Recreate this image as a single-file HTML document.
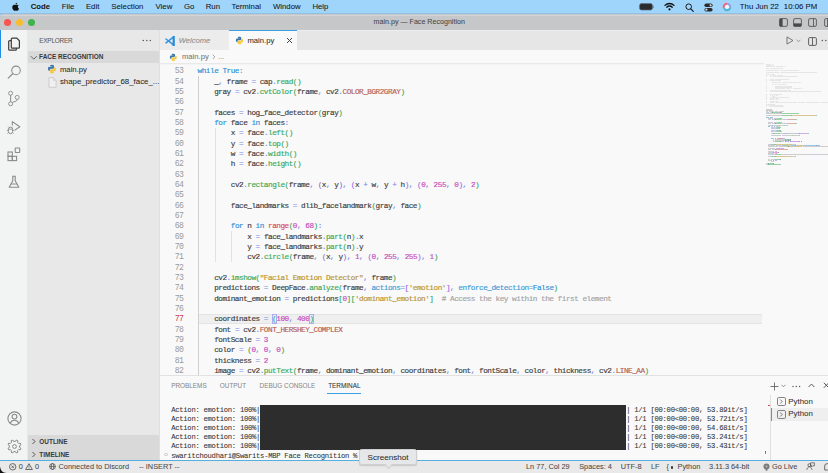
<!DOCTYPE html>
<html><head><meta charset="utf-8">
<style>
*{margin:0;padding:0;box-sizing:border-box}
html,body{width:828px;height:473px;overflow:hidden;background:#000}
body{position:relative;font-family:"Liberation Sans",sans-serif;color:#333}
.a{position:absolute}
.t{position:absolute;white-space:pre;line-height:1;-webkit-text-stroke:0.06px currentColor}
.ln{position:absolute;left:150px;width:33.2px;letter-spacing:-0.75px;text-align:right;font-family:"Liberation Mono",monospace;font-size:8.2px;line-height:10.33px;height:10.33px;white-space:pre}
.cl{position:absolute;letter-spacing:-0.476px;font-family:"Liberation Mono",monospace;font-size:7.7px;line-height:10.33px;height:10.33px;white-space:pre;color:#3b3b3b;-webkit-text-stroke:0.15px currentColor}
.term{position:absolute;font-family:"Liberation Mono",monospace;font-size:6.6px;line-height:9.3px;white-space:pre;color:#333}
</style></head><body>
<!-- menu bar -->
<div class="a" style="left:0;top:0;width:828px;height:20px;background:#a0d5fb"></div>
<div class="a" style="left:0;top:13px;width:828px;height:7px;background:#90c0e4"></div>
<!-- title bar -->
<div class="a" style="left:0;top:14px;width:828px;height:16px;background:#c6c7c9;border-top-left-radius:4px"></div>
<div class="a" style="left:0;top:14.6px;width:828px;height:0.8px;background:#d4d4d6;border-top-left-radius:4px"></div>
<!-- activity bar -->
<div class="a" style="left:0;top:30px;width:27px;height:430px;background:#f2f3f3"></div>
<div class="a" style="left:0;top:30px;width:1.4px;height:27.5px;background:#1f8ee6"></div>
<!-- sidebar -->
<div class="a" style="left:27px;top:30px;width:133px;height:430px;background:#e8e8e8"></div>
<div class="a" style="left:27.5px;top:51px;width:132px;height:11.5px;background:#d9d9da"></div>
<div class="a" style="left:27.5px;top:435px;width:132px;height:25px;background:#d9d9da"></div>
<!-- tab bar -->
<div class="a" style="left:160px;top:30px;width:668px;height:20px;background:#e6e6e6"></div>
<div class="a" style="left:160px;top:30px;width:69px;height:20px;background:#ececec"></div>
<div class="a" style="left:229px;top:30px;width:68px;height:20px;background:#f9f9f9"></div>
<div class="a" style="left:229px;top:30px;width:68px;height:1px;background:#3c9ee0"></div>
<div class="a" style="left:297px;top:30px;width:531px;height:1px;background:#ededef"></div>
<!-- breadcrumb + editor -->
<div class="a" style="left:160px;top:50px;width:668px;height:326px;background:#f9f9f9"></div>
<div class="a" style="left:160px;top:63px;width:604px;height:2px;background:linear-gradient(#e3e3e3,#f9f9f9)"></div>
<div class="a" style="left:199px;top:313.62px;width:563px;height:10.33px;background:#efefef;border-top:0.6px solid #e4e4e4;border-bottom:0.6px solid #e4e4e4"></div>
<div class="a" style="left:198.20px;top:76.03px;width:0.8px;height:298.97px;background:#d0d0d0"></div>
<div class="a" style="left:214.78px;top:127.68px;width:0.8px;height:134.29px;background:#e2e2e2"></div>
<div class="a" style="left:231.36px;top:230.98px;width:0.8px;height:30.99px;background:#e2e2e2"></div>
<div class="ln" style="top:66.30px;color:#9a9a9a">53</div>
<div class="cl" style="top:66.30px;left:197.60px"><span style="color:#2a8fd6">while</span> <span style="color:#2a8fd6">True</span><span style="color:#7b8ae6">:</span></div>
<div class="ln" style="top:76.63px;color:#9a9a9a">54</div>
<div class="cl" style="top:76.63px;left:214.18px"><span style="color:#3b3b3b">_</span><span style="color:#7b8ae6">,</span> <span style="color:#3b3b3b">frame</span> <span style="color:#7b8ae6">=</span> <span style="color:#3b3b3b">cap</span><span style="color:#7b8ae6">.</span><span style="color:#38a858">read</span><span style="color:#38a858">(</span><span style="color:#38a858">)</span></div>
<div class="ln" style="top:86.96px;color:#9a9a9a">55</div>
<div class="cl" style="top:86.96px;left:214.18px"><span style="color:#3b3b3b">gray</span> <span style="color:#7b8ae6">=</span> <span style="color:#3b3b3b">cv2</span><span style="color:#7b8ae6">.</span><span style="color:#38a858">cvtColor</span><span style="color:#38a858">(</span><span style="color:#3b3b3b">frame</span><span style="color:#7b8ae6">,</span> <span style="color:#3b3b3b">cv2</span><span style="color:#7b8ae6">.</span><span style="color:#b5614f">COLOR_BGR2GRAY</span><span style="color:#38a858">)</span></div>
<div class="ln" style="top:97.29px;color:#9a9a9a">56</div>
<div class="cl" style="top:97.29px;left:197.60px"></div>
<div class="ln" style="top:107.62px;color:#9a9a9a">57</div>
<div class="cl" style="top:107.62px;left:214.18px"><span style="color:#3b3b3b">faces</span> <span style="color:#7b8ae6">=</span> <span style="color:#3b3b3b">hog_face_detector</span><span style="color:#38a858">(</span><span style="color:#3b3b3b">gray</span><span style="color:#38a858">)</span></div>
<div class="ln" style="top:117.95px;color:#9a9a9a">58</div>
<div class="cl" style="top:117.95px;left:214.18px"><span style="color:#2a8fd6">for</span> <span style="color:#3b3b3b">face</span> <span style="color:#2a8fd6">in</span> <span style="color:#3b3b3b">faces</span><span style="color:#7b8ae6">:</span></div>
<div class="ln" style="top:128.28px;color:#9a9a9a">59</div>
<div class="cl" style="top:128.28px;left:230.76px"><span style="color:#3b3b3b">x</span> <span style="color:#7b8ae6">=</span> <span style="color:#3b3b3b">face</span><span style="color:#7b8ae6">.</span><span style="color:#38a858">left</span><span style="color:#38a858">(</span><span style="color:#38a858">)</span></div>
<div class="ln" style="top:138.61px;color:#9a9a9a">60</div>
<div class="cl" style="top:138.61px;left:230.76px"><span style="color:#3b3b3b">y</span> <span style="color:#7b8ae6">=</span> <span style="color:#3b3b3b">face</span><span style="color:#7b8ae6">.</span><span style="color:#38a858">top</span><span style="color:#38a858">(</span><span style="color:#38a858">)</span></div>
<div class="ln" style="top:148.94px;color:#9a9a9a">61</div>
<div class="cl" style="top:148.94px;left:230.76px"><span style="color:#3b3b3b">w</span> <span style="color:#7b8ae6">=</span> <span style="color:#3b3b3b">face</span><span style="color:#7b8ae6">.</span><span style="color:#38a858">width</span><span style="color:#38a858">(</span><span style="color:#38a858">)</span></div>
<div class="ln" style="top:159.27px;color:#9a9a9a">62</div>
<div class="cl" style="top:159.27px;left:230.76px"><span style="color:#3b3b3b">h</span> <span style="color:#7b8ae6">=</span> <span style="color:#3b3b3b">face</span><span style="color:#7b8ae6">.</span><span style="color:#38a858">height</span><span style="color:#38a858">(</span><span style="color:#38a858">)</span></div>
<div class="ln" style="top:169.60px;color:#9a9a9a">63</div>
<div class="cl" style="top:169.60px;left:197.60px"></div>
<div class="ln" style="top:179.93px;color:#9a9a9a">64</div>
<div class="cl" style="top:179.93px;left:230.76px"><span style="color:#3b3b3b">cv2</span><span style="color:#7b8ae6">.</span><span style="color:#38a858">rectangle</span><span style="color:#38a858">(</span><span style="color:#3b3b3b">frame</span><span style="color:#7b8ae6">,</span> <span style="color:#9b6fe0">(</span><span style="color:#3b3b3b">x</span><span style="color:#7b8ae6">,</span> <span style="color:#3b3b3b">y</span><span style="color:#9b6fe0">)</span><span style="color:#7b8ae6">,</span> <span style="color:#9b6fe0">(</span><span style="color:#3b3b3b">x</span> <span style="color:#7b8ae6">+</span> <span style="color:#3b3b3b">w</span><span style="color:#7b8ae6">,</span> <span style="color:#3b3b3b">y</span> <span style="color:#7b8ae6">+</span> <span style="color:#3b3b3b">h</span><span style="color:#9b6fe0">)</span><span style="color:#7b8ae6">,</span> <span style="color:#9b6fe0">(</span><span style="color:#c845bd">0</span><span style="color:#7b8ae6">,</span> <span style="color:#c845bd">255</span><span style="color:#7b8ae6">,</span> <span style="color:#c845bd">0</span><span style="color:#9b6fe0">)</span><span style="color:#7b8ae6">,</span> <span style="color:#c845bd">2</span><span style="color:#38a858">)</span></div>
<div class="ln" style="top:190.26px;color:#9a9a9a">65</div>
<div class="cl" style="top:190.26px;left:197.60px"></div>
<div class="ln" style="top:200.59px;color:#9a9a9a">66</div>
<div class="cl" style="top:200.59px;left:230.76px"><span style="color:#3b3b3b">face_landmarks</span> <span style="color:#7b8ae6">=</span> <span style="color:#3b3b3b">dlib_facelandmark</span><span style="color:#38a858">(</span><span style="color:#3b3b3b">gray</span><span style="color:#7b8ae6">,</span> <span style="color:#3b3b3b">face</span><span style="color:#38a858">)</span></div>
<div class="ln" style="top:210.92px;color:#9a9a9a">67</div>
<div class="cl" style="top:210.92px;left:197.60px"></div>
<div class="ln" style="top:221.25px;color:#9a9a9a">68</div>
<div class="cl" style="top:221.25px;left:230.76px"><span style="color:#2a8fd6">for</span> <span style="color:#3b3b3b">n</span> <span style="color:#2a8fd6">in</span> <span style="color:#dc4660">range</span><span style="color:#38a858">(</span><span style="color:#c845bd">0</span><span style="color:#7b8ae6">,</span> <span style="color:#c845bd">68</span><span style="color:#38a858">)</span><span style="color:#7b8ae6">:</span></div>
<div class="ln" style="top:231.58px;color:#9a9a9a">69</div>
<div class="cl" style="top:231.58px;left:247.34px"><span style="color:#3b3b3b">x</span> <span style="color:#7b8ae6">=</span> <span style="color:#3b3b3b">face_landmarks</span><span style="color:#7b8ae6">.</span><span style="color:#38a858">part</span><span style="color:#38a858">(</span><span style="color:#3b3b3b">n</span><span style="color:#38a858">)</span><span style="color:#7b8ae6">.</span><span style="color:#3b3b3b">x</span></div>
<div class="ln" style="top:241.91px;color:#9a9a9a">70</div>
<div class="cl" style="top:241.91px;left:247.34px"><span style="color:#3b3b3b">y</span> <span style="color:#7b8ae6">=</span> <span style="color:#3b3b3b">face_landmarks</span><span style="color:#7b8ae6">.</span><span style="color:#38a858">part</span><span style="color:#38a858">(</span><span style="color:#3b3b3b">n</span><span style="color:#38a858">)</span><span style="color:#7b8ae6">.</span><span style="color:#3b3b3b">y</span></div>
<div class="ln" style="top:252.24px;color:#9a9a9a">71</div>
<div class="cl" style="top:252.24px;left:247.34px"><span style="color:#3b3b3b">cv2</span><span style="color:#7b8ae6">.</span><span style="color:#38a858">circle</span><span style="color:#38a858">(</span><span style="color:#3b3b3b">frame</span><span style="color:#7b8ae6">,</span> <span style="color:#9b6fe0">(</span><span style="color:#3b3b3b">x</span><span style="color:#7b8ae6">,</span> <span style="color:#3b3b3b">y</span><span style="color:#9b6fe0">)</span><span style="color:#7b8ae6">,</span> <span style="color:#c845bd">1</span><span style="color:#7b8ae6">,</span> <span style="color:#9b6fe0">(</span><span style="color:#c845bd">0</span><span style="color:#7b8ae6">,</span> <span style="color:#c845bd">255</span><span style="color:#7b8ae6">,</span> <span style="color:#c845bd">255</span><span style="color:#9b6fe0">)</span><span style="color:#7b8ae6">,</span> <span style="color:#c845bd">1</span><span style="color:#38a858">)</span></div>
<div class="ln" style="top:262.57px;color:#9a9a9a">72</div>
<div class="cl" style="top:262.57px;left:197.60px"></div>
<div class="ln" style="top:272.90px;color:#9a9a9a">73</div>
<div class="cl" style="top:272.90px;left:214.18px"><span style="color:#3b3b3b">cv2</span><span style="color:#7b8ae6">.</span><span style="color:#38a858">imshow</span><span style="color:#38a858">(</span><span style="color:#b8932f">&quot;Facial Emotion Detector&quot;</span><span style="color:#7b8ae6">,</span> <span style="color:#3b3b3b">frame</span><span style="color:#38a858">)</span></div>
<div class="ln" style="top:283.23px;color:#9a9a9a">74</div>
<div class="cl" style="top:283.23px;left:214.18px"><span style="color:#3b3b3b">predictions</span> <span style="color:#7b8ae6">=</span> <span style="color:#3b3b3b">DeepFace</span><span style="color:#7b8ae6">.</span><span style="color:#38a858">analyze</span><span style="color:#38a858">(</span><span style="color:#3b3b3b">frame</span><span style="color:#7b8ae6">,</span> <span style="color:#3a9ad6">actions</span><span style="color:#7b8ae6">=</span><span style="color:#9b6fe0">[</span><span style="color:#b8932f">&#x27;emotion&#x27;</span><span style="color:#9b6fe0">]</span><span style="color:#7b8ae6">,</span> <span style="color:#3a9ad6">enforce_detection</span><span style="color:#7b8ae6">=</span><span style="color:#2a8fd6">False</span><span style="color:#38a858">)</span></div>
<div class="ln" style="top:293.56px;color:#9a9a9a">75</div>
<div class="cl" style="top:293.56px;left:214.18px"><span style="color:#3b3b3b">dominant_emotion</span> <span style="color:#7b8ae6">=</span> <span style="color:#3b3b3b">predictions</span><span style="color:#38a858">[</span><span style="color:#c845bd">0</span><span style="color:#38a858">]</span><span style="color:#38a858">[</span><span style="color:#b8932f">&#x27;dominant_emotion&#x27;</span><span style="color:#38a858">]</span>  <span style="color:#a3a3a3"># Access the key within the first element</span></div>
<div class="ln" style="top:303.89px;color:#9a9a9a">76</div>
<div class="cl" style="top:303.89px;left:197.60px"></div>
<div class="ln" style="top:314.22px;color:#d2405a">77</div>
<div class="cl" style="top:314.22px;left:214.18px"><span style="color:#3b3b3b">coordinates</span> <span style="color:#7b8ae6">=</span> <span style="color:#38a858">(</span><span style="color:#c845bd">100</span><span style="color:#7b8ae6">,</span> <span style="color:#c845bd">400</span><span style="color:#38a858">)</span></div>
<div class="ln" style="top:324.55px;color:#9a9a9a">78</div>
<div class="cl" style="top:324.55px;left:214.18px"><span style="color:#3b3b3b">font</span> <span style="color:#7b8ae6">=</span> <span style="color:#3b3b3b">cv2</span><span style="color:#7b8ae6">.</span><span style="color:#b5614f">FONT_HERSHEY_COMPLEX</span></div>
<div class="ln" style="top:334.88px;color:#9a9a9a">79</div>
<div class="cl" style="top:334.88px;left:214.18px"><span style="color:#3b3b3b">fontScale</span> <span style="color:#7b8ae6">=</span> <span style="color:#c845bd">3</span></div>
<div class="ln" style="top:345.21px;color:#9a9a9a">80</div>
<div class="cl" style="top:345.21px;left:214.18px"><span style="color:#3b3b3b">color</span> <span style="color:#7b8ae6">=</span> <span style="color:#38a858">(</span><span style="color:#c845bd">0</span><span style="color:#7b8ae6">,</span> <span style="color:#c845bd">0</span><span style="color:#7b8ae6">,</span> <span style="color:#c845bd">0</span><span style="color:#38a858">)</span></div>
<div class="ln" style="top:355.54px;color:#9a9a9a">81</div>
<div class="cl" style="top:355.54px;left:214.18px"><span style="color:#3b3b3b">thickness</span> <span style="color:#7b8ae6">=</span> <span style="color:#c845bd">2</span></div>
<div class="ln" style="top:365.87px;color:#9a9a9a">82</div>
<div class="cl" style="top:365.87px;left:214.18px"><span style="color:#3b3b3b">image</span> <span style="color:#7b8ae6">=</span> <span style="color:#3b3b3b">cv2</span><span style="color:#7b8ae6">.</span><span style="color:#38a858">putText</span><span style="color:#38a858">(</span><span style="color:#3b3b3b">frame</span><span style="color:#7b8ae6">,</span> <span style="color:#3b3b3b">dominant_emotion</span><span style="color:#7b8ae6">,</span> <span style="color:#3b3b3b">coordinates</span><span style="color:#7b8ae6">,</span> <span style="color:#3b3b3b">font</span><span style="color:#7b8ae6">,</span> <span style="color:#3b3b3b">fontScale</span><span style="color:#7b8ae6">,</span> <span style="color:#3b3b3b">color</span><span style="color:#7b8ae6">,</span> <span style="color:#3b3b3b">thickness</span><span style="color:#7b8ae6">,</span> <span style="color:#3b3b3b">cv2</span><span style="color:#7b8ae6">.</span><span style="color:#b5614f">LINE_AA</span><span style="color:#38a858">)</span></div>
<div class="a" style="left:271.91px;top:313.82px;width:4.74px;height:9.93px;border:0.8px solid #a9aef0;background:rgba(180,190,255,.08)"></div>
<div class="a" style="left:309.21px;top:313.82px;width:4.74px;height:9.93px;border:0.8px solid #a9aef0;background:rgba(180,190,255,.08)"></div>
<div class="a" style="left:766.00px;top:63.50px;width:0.62px;height:0.7px;background:#e6e6e6"></div>
<div class="a" style="left:767.24px;top:63.50px;width:3.72px;height:0.7px;background:#e6e6e6"></div>
<div class="a" style="left:771.58px;top:63.50px;width:1.86px;height:0.7px;background:#e6e6e6"></div>
<div class="a" style="left:766.00px;top:64.66px;width:0.62px;height:0.7px;background:#e6e6e6"></div>
<div class="a" style="left:767.24px;top:64.66px;width:3.72px;height:0.7px;background:#e6e6e6"></div>
<div class="a" style="left:771.58px;top:64.66px;width:2.48px;height:0.7px;background:#e6e6e6"></div>
<div class="a" style="left:766.00px;top:65.82px;width:0.62px;height:0.7px;background:#e6e6e6"></div>
<div class="a" style="left:767.24px;top:65.82px;width:2.48px;height:0.7px;background:#e6e6e6"></div>
<div class="a" style="left:770.34px;top:65.82px;width:4.96px;height:0.7px;background:#e6e6e6"></div>
<div class="a" style="left:775.92px;top:65.82px;width:3.72px;height:0.7px;background:#e6e6e6"></div>
<div class="a" style="left:780.26px;top:65.82px;width:4.96px;height:0.7px;background:#e6e6e6"></div>
<div class="a" style="left:766.00px;top:68.14px;width:0.62px;height:0.7px;background:#e6e6e6"></div>
<div class="a" style="left:767.24px;top:68.14px;width:1.86px;height:0.7px;background:#e6e6e6"></div>
<div class="a" style="left:769.72px;top:68.14px;width:0.62px;height:0.7px;background:#e6e6e6"></div>
<div class="a" style="left:770.96px;top:68.14px;width:11.78px;height:0.7px;background:#e6e6e6"></div>
<div class="a" style="left:766.00px;top:70.46px;width:0.62px;height:0.7px;background:#e6e6e6"></div>
<div class="a" style="left:767.24px;top:70.46px;width:10.54px;height:0.7px;background:#e6e6e6"></div>
<div class="a" style="left:778.40px;top:70.46px;width:0.62px;height:0.7px;background:#e6e6e6"></div>
<div class="a" style="left:779.64px;top:70.46px;width:19.84px;height:0.7px;background:#e6e6e6"></div>
<div class="a" style="left:766.00px;top:71.62px;width:0.62px;height:0.7px;background:#e6e6e6"></div>
<div class="a" style="left:767.24px;top:71.62px;width:10.54px;height:0.7px;background:#e6e6e6"></div>
<div class="a" style="left:778.40px;top:71.62px;width:0.62px;height:0.7px;background:#e6e6e6"></div>
<div class="a" style="left:779.64px;top:71.62px;width:37.82px;height:0.7px;background:#e6e6e6"></div>
<div class="a" style="left:766.00px;top:73.94px;width:0.62px;height:0.7px;background:#e6e6e6"></div>
<div class="a" style="left:767.24px;top:73.94px;width:3.10px;height:0.7px;background:#e6e6e6"></div>
<div class="a" style="left:770.96px;top:73.94px;width:3.10px;height:0.7px;background:#e6e6e6"></div>
<div class="a" style="left:766.00px;top:75.10px;width:0.62px;height:0.7px;background:#e6e6e6"></div>
<div class="a" style="left:769.72px;top:75.10px;width:1.24px;height:0.7px;background:#e6e6e6"></div>
<div class="a" style="left:771.58px;top:75.10px;width:3.10px;height:0.7px;background:#e6e6e6"></div>
<div class="a" style="left:775.30px;top:75.10px;width:0.62px;height:0.7px;background:#e6e6e6"></div>
<div class="a" style="left:776.54px;top:75.10px;width:6.20px;height:0.7px;background:#e6e6e6"></div>
<div class="a" style="left:766.00px;top:76.26px;width:0.62px;height:0.7px;background:#e6e6e6"></div>
<div class="a" style="left:769.72px;top:76.26px;width:2.48px;height:0.7px;background:#e6e6e6"></div>
<div class="a" style="left:772.82px;top:76.26px;width:0.62px;height:0.7px;background:#e6e6e6"></div>
<div class="a" style="left:774.06px;top:76.26px;width:11.78px;height:0.7px;background:#e6e6e6"></div>
<div class="a" style="left:786.46px;top:76.26px;width:11.78px;height:0.7px;background:#e6e6e6"></div>
<div class="a" style="left:766.00px;top:78.58px;width:0.62px;height:0.7px;background:#e6e6e6"></div>
<div class="a" style="left:769.72px;top:78.58px;width:3.10px;height:0.7px;background:#e6e6e6"></div>
<div class="a" style="left:773.44px;top:78.58px;width:0.62px;height:0.7px;background:#e6e6e6"></div>
<div class="a" style="left:774.68px;top:78.58px;width:14.26px;height:0.7px;background:#e6e6e6"></div>
<div class="a" style="left:766.00px;top:79.74px;width:0.62px;height:0.7px;background:#e6e6e6"></div>
<div class="a" style="left:769.72px;top:79.74px;width:1.86px;height:0.7px;background:#e6e6e6"></div>
<div class="a" style="left:772.20px;top:79.74px;width:2.48px;height:0.7px;background:#e6e6e6"></div>
<div class="a" style="left:775.30px;top:79.74px;width:1.24px;height:0.7px;background:#e6e6e6"></div>
<div class="a" style="left:777.16px;top:79.74px;width:3.72px;height:0.7px;background:#e6e6e6"></div>
<div class="a" style="left:766.00px;top:82.06px;width:0.62px;height:0.7px;background:#e6e6e6"></div>
<div class="a" style="left:772.20px;top:82.06px;width:8.68px;height:0.7px;background:#e6e6e6"></div>
<div class="a" style="left:781.50px;top:82.06px;width:0.62px;height:0.7px;background:#e6e6e6"></div>
<div class="a" style="left:782.74px;top:82.06px;width:14.26px;height:0.7px;background:#e6e6e6"></div>
<div class="a" style="left:797.62px;top:82.06px;width:3.10px;height:0.7px;background:#e6e6e6"></div>
<div class="a" style="left:766.00px;top:84.38px;width:0.62px;height:0.7px;background:#e6e6e6"></div>
<div class="a" style="left:772.20px;top:84.38px;width:1.86px;height:0.7px;background:#e6e6e6"></div>
<div class="a" style="left:774.68px;top:84.38px;width:0.62px;height:0.7px;background:#e6e6e6"></div>
<div class="a" style="left:775.92px;top:84.38px;width:1.24px;height:0.7px;background:#e6e6e6"></div>
<div class="a" style="left:777.78px;top:84.38px;width:4.96px;height:0.7px;background:#e6e6e6"></div>
<div class="a" style="left:783.36px;top:84.38px;width:2.48px;height:0.7px;background:#e6e6e6"></div>
<div class="a" style="left:766.00px;top:85.54px;width:0.62px;height:0.7px;background:#e6e6e6"></div>
<div class="a" style="left:774.68px;top:85.54px;width:0.62px;height:0.7px;background:#e6e6e6"></div>
<div class="a" style="left:775.92px;top:85.54px;width:0.62px;height:0.7px;background:#e6e6e6"></div>
<div class="a" style="left:777.16px;top:85.54px;width:14.88px;height:0.7px;background:#e6e6e6"></div>
<div class="a" style="left:766.00px;top:86.70px;width:0.62px;height:0.7px;background:#e6e6e6"></div>
<div class="a" style="left:774.68px;top:86.70px;width:0.62px;height:0.7px;background:#e6e6e6"></div>
<div class="a" style="left:775.92px;top:86.70px;width:0.62px;height:0.7px;background:#e6e6e6"></div>
<div class="a" style="left:777.16px;top:86.70px;width:14.88px;height:0.7px;background:#e6e6e6"></div>
<div class="a" style="left:766.00px;top:87.86px;width:0.62px;height:0.7px;background:#e6e6e6"></div>
<div class="a" style="left:774.68px;top:87.86px;width:10.54px;height:0.7px;background:#e6e6e6"></div>
<div class="a" style="left:785.84px;top:87.86px;width:1.86px;height:0.7px;background:#e6e6e6"></div>
<div class="a" style="left:788.32px;top:87.86px;width:1.86px;height:0.7px;background:#e6e6e6"></div>
<div class="a" style="left:790.80px;top:87.86px;width:1.24px;height:0.7px;background:#e6e6e6"></div>
<div class="a" style="left:792.66px;top:87.86px;width:1.86px;height:0.7px;background:#e6e6e6"></div>
<div class="a" style="left:795.14px;top:87.86px;width:2.48px;height:0.7px;background:#e6e6e6"></div>
<div class="a" style="left:798.24px;top:87.86px;width:3.10px;height:0.7px;background:#e6e6e6"></div>
<div class="a" style="left:801.96px;top:87.86px;width:1.24px;height:0.7px;background:#e6e6e6"></div>
<div class="a" style="left:766.00px;top:90.18px;width:0.62px;height:0.7px;background:#e6e6e6"></div>
<div class="a" style="left:769.72px;top:90.18px;width:9.92px;height:0.7px;background:#e6e6e6"></div>
<div class="a" style="left:780.26px;top:90.18px;width:6.82px;height:0.7px;background:#e6e6e6"></div>
<div class="a" style="left:787.70px;top:90.18px;width:3.72px;height:0.7px;background:#e6e6e6"></div>
<div class="a" style="left:766.00px;top:91.34px;width:0.62px;height:0.7px;background:#e6e6e6"></div>
<div class="a" style="left:769.72px;top:91.34px;width:6.82px;height:0.7px;background:#e6e6e6"></div>
<div class="a" style="left:777.16px;top:91.34px;width:0.62px;height:0.7px;background:#e6e6e6"></div>
<div class="a" style="left:778.40px;top:91.34px;width:14.26px;height:0.7px;background:#e6e6e6"></div>
<div class="a" style="left:793.28px;top:91.34px;width:12.40px;height:0.7px;background:#e6e6e6"></div>
<div class="a" style="left:806.30px;top:91.34px;width:14.88px;height:0.7px;background:#e6e6e6"></div>
<div class="a" style="left:766.00px;top:93.66px;width:0.62px;height:0.7px;background:#e6e6e6"></div>
<div class="a" style="left:769.72px;top:93.66px;width:1.86px;height:0.7px;background:#e6e6e6"></div>
<div class="a" style="left:772.20px;top:93.66px;width:0.62px;height:0.7px;background:#e6e6e6"></div>
<div class="a" style="left:773.44px;top:93.66px;width:8.68px;height:0.7px;background:#e6e6e6"></div>
<div class="a" style="left:766.00px;top:94.82px;width:0.62px;height:0.7px;background:#e6e6e6"></div>
<div class="a" style="left:769.72px;top:94.82px;width:1.24px;height:0.7px;background:#e6e6e6"></div>
<div class="a" style="left:771.58px;top:94.82px;width:1.86px;height:0.7px;background:#e6e6e6"></div>
<div class="a" style="left:774.06px;top:94.82px;width:1.24px;height:0.7px;background:#e6e6e6"></div>
<div class="a" style="left:775.92px;top:94.82px;width:1.86px;height:0.7px;background:#e6e6e6"></div>
<div class="a" style="left:766.00px;top:95.98px;width:0.62px;height:0.7px;background:#e6e6e6"></div>
<div class="a" style="left:772.20px;top:95.98px;width:3.10px;height:0.7px;background:#e6e6e6"></div>
<div class="a" style="left:766.00px;top:97.14px;width:0.62px;height:0.7px;background:#e6e6e6"></div>
<div class="a" style="left:769.72px;top:97.14px;width:2.48px;height:0.7px;background:#e6e6e6"></div>
<div class="a" style="left:772.82px;top:97.14px;width:0.62px;height:0.7px;background:#e6e6e6"></div>
<div class="a" style="left:774.06px;top:97.14px;width:14.88px;height:0.7px;background:#e6e6e6"></div>
<div class="a" style="left:766.00px;top:98.30px;width:0.62px;height:0.7px;background:#e6e6e6"></div>
<div class="a" style="left:769.72px;top:98.30px;width:5.58px;height:0.7px;background:#e6e6e6"></div>
<div class="a" style="left:775.92px;top:98.30px;width:0.62px;height:0.7px;background:#e6e6e6"></div>
<div class="a" style="left:777.16px;top:98.30px;width:0.62px;height:0.7px;background:#e6e6e6"></div>
<div class="a" style="left:766.00px;top:99.46px;width:0.62px;height:0.7px;background:#e6e6e6"></div>
<div class="a" style="left:769.72px;top:99.46px;width:3.10px;height:0.7px;background:#e6e6e6"></div>
<div class="a" style="left:773.44px;top:99.46px;width:0.62px;height:0.7px;background:#e6e6e6"></div>
<div class="a" style="left:774.68px;top:99.46px;width:1.86px;height:0.7px;background:#e6e6e6"></div>
<div class="a" style="left:777.16px;top:99.46px;width:1.24px;height:0.7px;background:#e6e6e6"></div>
<div class="a" style="left:779.02px;top:99.46px;width:1.24px;height:0.7px;background:#e6e6e6"></div>
<div class="a" style="left:766.00px;top:100.62px;width:0.62px;height:0.7px;background:#e6e6e6"></div>
<div class="a" style="left:769.72px;top:100.62px;width:5.58px;height:0.7px;background:#e6e6e6"></div>
<div class="a" style="left:775.92px;top:100.62px;width:0.62px;height:0.7px;background:#e6e6e6"></div>
<div class="a" style="left:777.16px;top:100.62px;width:0.62px;height:0.7px;background:#e6e6e6"></div>
<div class="a" style="left:766.00px;top:101.78px;width:0.62px;height:0.7px;background:#e6e6e6"></div>
<div class="a" style="left:769.72px;top:101.78px;width:3.10px;height:0.7px;background:#e6e6e6"></div>
<div class="a" style="left:773.44px;top:101.78px;width:0.62px;height:0.7px;background:#e6e6e6"></div>
<div class="a" style="left:774.68px;top:101.78px;width:11.16px;height:0.7px;background:#e6e6e6"></div>
<div class="a" style="left:786.46px;top:101.78px;width:10.54px;height:0.7px;background:#e6e6e6"></div>
<div class="a" style="left:797.62px;top:101.78px;width:7.44px;height:0.7px;background:#e6e6e6"></div>
<div class="a" style="left:805.68px;top:101.78px;width:3.10px;height:0.7px;background:#e6e6e6"></div>
<div class="a" style="left:809.40px;top:101.78px;width:6.20px;height:0.7px;background:#e6e6e6"></div>
<div class="a" style="left:816.22px;top:101.78px;width:3.72px;height:0.7px;background:#e6e6e6"></div>
<div class="a" style="left:820.56px;top:101.78px;width:6.20px;height:0.7px;background:#e6e6e6"></div>
<div class="a" style="left:827.38px;top:101.78px;width:7.44px;height:0.7px;background:#e6e6e6"></div>
<div class="a" style="left:766.00px;top:104.10px;width:0.62px;height:0.7px;background:#e6e6e6"></div>
<div class="a" style="left:767.24px;top:104.10px;width:8.06px;height:0.7px;background:#e6e6e6"></div>
<div class="a" style="left:766.00px;top:105.26px;width:0.62px;height:0.7px;background:#e6e6e6"></div>
<div class="a" style="left:768.48px;top:105.26px;width:14.26px;height:0.7px;background:#e6e6e6"></div>
<div class="a" style="left:766.00px;top:106.42px;width:0.62px;height:0.7px;background:#e6e6e6"></div>
<div class="a" style="left:769.72px;top:106.42px;width:14.26px;height:0.7px;background:#e6e6e6"></div>
<div class="a" style="left:766.00px;top:108.74px;width:3.72px;height:0.7px;background:#3b3b3b;opacity:0.22"></div>
<div class="a" style="left:770.34px;top:108.74px;width:1.86px;height:0.7px;background:#3b3b3b;opacity:0.22"></div>
<div class="a" style="left:766.00px;top:109.90px;width:3.72px;height:0.7px;background:#3b3b3b;opacity:0.22"></div>
<div class="a" style="left:770.34px;top:109.90px;width:2.48px;height:0.7px;background:#3b3b3b;opacity:0.22"></div>
<div class="a" style="left:766.00px;top:111.06px;width:2.48px;height:0.7px;background:#3b3b3b;opacity:0.22"></div>
<div class="a" style="left:769.10px;top:111.06px;width:4.96px;height:0.7px;background:#3b3b3b;opacity:0.22"></div>
<div class="a" style="left:774.68px;top:111.06px;width:3.72px;height:0.7px;background:#3b3b3b;opacity:0.22"></div>
<div class="a" style="left:779.02px;top:111.06px;width:4.96px;height:0.7px;background:#3b3b3b;opacity:0.22"></div>
<div class="a" style="left:766.00px;top:112.22px;width:1.86px;height:0.7px;background:#3b3b3b;opacity:0.22"></div>
<div class="a" style="left:768.48px;top:112.22px;width:0.62px;height:0.7px;background:#7b8ae6;opacity:0.5"></div>
<div class="a" style="left:769.72px;top:112.22px;width:1.86px;height:0.7px;background:#3b3b3b;opacity:0.22"></div>
<div class="a" style="left:771.58px;top:112.22px;width:0.62px;height:0.7px;background:#7b8ae6;opacity:0.5"></div>
<div class="a" style="left:772.20px;top:112.22px;width:7.44px;height:0.7px;background:#38a858;opacity:0.5"></div>
<div class="a" style="left:779.64px;top:112.22px;width:0.62px;height:0.7px;background:#38a858;opacity:0.5"></div>
<div class="a" style="left:780.26px;top:112.22px;width:0.62px;height:0.7px;background:#c845bd;opacity:0.5"></div>
<div class="a" style="left:780.88px;top:112.22px;width:0.62px;height:0.7px;background:#38a858;opacity:0.5"></div>
<div class="a" style="left:766.00px;top:113.38px;width:10.54px;height:0.7px;background:#3b3b3b;opacity:0.22"></div>
<div class="a" style="left:777.16px;top:113.38px;width:0.62px;height:0.7px;background:#7b8ae6;opacity:0.5"></div>
<div class="a" style="left:778.40px;top:113.38px;width:2.48px;height:0.7px;background:#3b3b3b;opacity:0.22"></div>
<div class="a" style="left:780.88px;top:113.38px;width:0.62px;height:0.7px;background:#7b8ae6;opacity:0.5"></div>
<div class="a" style="left:781.50px;top:113.38px;width:15.50px;height:0.7px;background:#38a858;opacity:0.5"></div>
<div class="a" style="left:797.00px;top:113.38px;width:0.62px;height:0.7px;background:#38a858;opacity:0.5"></div>
<div class="a" style="left:797.62px;top:113.38px;width:0.62px;height:0.7px;background:#38a858;opacity:0.5"></div>
<div class="a" style="left:766.00px;top:114.54px;width:10.54px;height:0.7px;background:#3b3b3b;opacity:0.22"></div>
<div class="a" style="left:777.16px;top:114.54px;width:0.62px;height:0.7px;background:#7b8ae6;opacity:0.5"></div>
<div class="a" style="left:778.40px;top:114.54px;width:2.48px;height:0.7px;background:#3b3b3b;opacity:0.22"></div>
<div class="a" style="left:780.88px;top:114.54px;width:0.62px;height:0.7px;background:#7b8ae6;opacity:0.5"></div>
<div class="a" style="left:781.50px;top:114.54px;width:9.30px;height:0.7px;background:#38a858;opacity:0.5"></div>
<div class="a" style="left:790.80px;top:114.54px;width:0.62px;height:0.7px;background:#38a858;opacity:0.5"></div>
<div class="a" style="left:791.42px;top:114.54px;width:24.18px;height:0.7px;background:#b8932f;opacity:0.5"></div>
<div class="a" style="left:815.60px;top:114.54px;width:0.62px;height:0.7px;background:#38a858;opacity:0.5"></div>
<div class="a" style="left:766.00px;top:116.86px;width:3.10px;height:0.7px;background:#2a8fd6;opacity:0.5"></div>
<div class="a" style="left:769.72px;top:116.86px;width:2.48px;height:0.7px;background:#2a8fd6;opacity:0.5"></div>
<div class="a" style="left:772.20px;top:116.86px;width:0.62px;height:0.7px;background:#7b8ae6;opacity:0.5"></div>
<div class="a" style="left:768.48px;top:118.02px;width:0.62px;height:0.7px;background:#3b3b3b;opacity:0.22"></div>
<div class="a" style="left:769.10px;top:118.02px;width:0.62px;height:0.7px;background:#7b8ae6;opacity:0.5"></div>
<div class="a" style="left:770.34px;top:118.02px;width:3.10px;height:0.7px;background:#3b3b3b;opacity:0.22"></div>
<div class="a" style="left:774.06px;top:118.02px;width:0.62px;height:0.7px;background:#7b8ae6;opacity:0.5"></div>
<div class="a" style="left:775.30px;top:118.02px;width:1.86px;height:0.7px;background:#3b3b3b;opacity:0.22"></div>
<div class="a" style="left:777.16px;top:118.02px;width:0.62px;height:0.7px;background:#7b8ae6;opacity:0.5"></div>
<div class="a" style="left:777.78px;top:118.02px;width:2.48px;height:0.7px;background:#38a858;opacity:0.5"></div>
<div class="a" style="left:780.26px;top:118.02px;width:0.62px;height:0.7px;background:#38a858;opacity:0.5"></div>
<div class="a" style="left:780.88px;top:118.02px;width:0.62px;height:0.7px;background:#38a858;opacity:0.5"></div>
<div class="a" style="left:768.48px;top:119.18px;width:2.48px;height:0.7px;background:#3b3b3b;opacity:0.22"></div>
<div class="a" style="left:771.58px;top:119.18px;width:0.62px;height:0.7px;background:#7b8ae6;opacity:0.5"></div>
<div class="a" style="left:772.82px;top:119.18px;width:1.86px;height:0.7px;background:#3b3b3b;opacity:0.22"></div>
<div class="a" style="left:774.68px;top:119.18px;width:0.62px;height:0.7px;background:#7b8ae6;opacity:0.5"></div>
<div class="a" style="left:775.30px;top:119.18px;width:4.96px;height:0.7px;background:#38a858;opacity:0.5"></div>
<div class="a" style="left:780.26px;top:119.18px;width:0.62px;height:0.7px;background:#38a858;opacity:0.5"></div>
<div class="a" style="left:780.88px;top:119.18px;width:3.10px;height:0.7px;background:#3b3b3b;opacity:0.22"></div>
<div class="a" style="left:783.98px;top:119.18px;width:0.62px;height:0.7px;background:#7b8ae6;opacity:0.5"></div>
<div class="a" style="left:785.22px;top:119.18px;width:1.86px;height:0.7px;background:#3b3b3b;opacity:0.22"></div>
<div class="a" style="left:787.08px;top:119.18px;width:0.62px;height:0.7px;background:#7b8ae6;opacity:0.5"></div>
<div class="a" style="left:787.70px;top:119.18px;width:8.68px;height:0.7px;background:#b5614f;opacity:0.5"></div>
<div class="a" style="left:796.38px;top:119.18px;width:0.62px;height:0.7px;background:#38a858;opacity:0.5"></div>
<div class="a" style="left:768.48px;top:121.50px;width:0.62px;height:0.7px;background:#3b3b3b;opacity:0.22"></div>
<div class="a" style="left:769.10px;top:121.50px;width:0.62px;height:0.7px;background:#7b8ae6;opacity:0.5"></div>
<div class="a" style="left:770.34px;top:121.50px;width:3.10px;height:0.7px;background:#3b3b3b;opacity:0.22"></div>
<div class="a" style="left:774.06px;top:121.50px;width:0.62px;height:0.7px;background:#7b8ae6;opacity:0.5"></div>
<div class="a" style="left:775.30px;top:121.50px;width:1.86px;height:0.7px;background:#3b3b3b;opacity:0.22"></div>
<div class="a" style="left:777.16px;top:121.50px;width:0.62px;height:0.7px;background:#7b8ae6;opacity:0.5"></div>
<div class="a" style="left:777.78px;top:121.50px;width:2.48px;height:0.7px;background:#38a858;opacity:0.5"></div>
<div class="a" style="left:780.26px;top:121.50px;width:0.62px;height:0.7px;background:#38a858;opacity:0.5"></div>
<div class="a" style="left:780.88px;top:121.50px;width:0.62px;height:0.7px;background:#38a858;opacity:0.5"></div>
<div class="a" style="left:768.48px;top:122.66px;width:2.48px;height:0.7px;background:#3b3b3b;opacity:0.22"></div>
<div class="a" style="left:771.58px;top:122.66px;width:0.62px;height:0.7px;background:#7b8ae6;opacity:0.5"></div>
<div class="a" style="left:772.82px;top:122.66px;width:1.86px;height:0.7px;background:#3b3b3b;opacity:0.22"></div>
<div class="a" style="left:774.68px;top:122.66px;width:0.62px;height:0.7px;background:#7b8ae6;opacity:0.5"></div>
<div class="a" style="left:775.30px;top:122.66px;width:4.96px;height:0.7px;background:#38a858;opacity:0.5"></div>
<div class="a" style="left:780.26px;top:122.66px;width:0.62px;height:0.7px;background:#38a858;opacity:0.5"></div>
<div class="a" style="left:780.88px;top:122.66px;width:3.10px;height:0.7px;background:#3b3b3b;opacity:0.22"></div>
<div class="a" style="left:783.98px;top:122.66px;width:0.62px;height:0.7px;background:#7b8ae6;opacity:0.5"></div>
<div class="a" style="left:785.22px;top:122.66px;width:1.86px;height:0.7px;background:#3b3b3b;opacity:0.22"></div>
<div class="a" style="left:787.08px;top:122.66px;width:0.62px;height:0.7px;background:#7b8ae6;opacity:0.5"></div>
<div class="a" style="left:787.70px;top:122.66px;width:8.68px;height:0.7px;background:#b5614f;opacity:0.5"></div>
<div class="a" style="left:796.38px;top:122.66px;width:0.62px;height:0.7px;background:#38a858;opacity:0.5"></div>
<div class="a" style="left:768.48px;top:124.98px;width:3.10px;height:0.7px;background:#3b3b3b;opacity:0.22"></div>
<div class="a" style="left:772.20px;top:124.98px;width:0.62px;height:0.7px;background:#7b8ae6;opacity:0.5"></div>
<div class="a" style="left:773.44px;top:124.98px;width:10.54px;height:0.7px;background:#3b3b3b;opacity:0.22"></div>
<div class="a" style="left:783.98px;top:124.98px;width:0.62px;height:0.7px;background:#38a858;opacity:0.5"></div>
<div class="a" style="left:784.60px;top:124.98px;width:2.48px;height:0.7px;background:#3b3b3b;opacity:0.22"></div>
<div class="a" style="left:787.08px;top:124.98px;width:0.62px;height:0.7px;background:#38a858;opacity:0.5"></div>
<div class="a" style="left:768.48px;top:126.14px;width:1.86px;height:0.7px;background:#2a8fd6;opacity:0.5"></div>
<div class="a" style="left:770.96px;top:126.14px;width:2.48px;height:0.7px;background:#3b3b3b;opacity:0.22"></div>
<div class="a" style="left:774.06px;top:126.14px;width:1.24px;height:0.7px;background:#2a8fd6;opacity:0.5"></div>
<div class="a" style="left:775.92px;top:126.14px;width:3.10px;height:0.7px;background:#3b3b3b;opacity:0.22"></div>
<div class="a" style="left:779.02px;top:126.14px;width:0.62px;height:0.7px;background:#7b8ae6;opacity:0.5"></div>
<div class="a" style="left:770.96px;top:127.30px;width:0.62px;height:0.7px;background:#3b3b3b;opacity:0.22"></div>
<div class="a" style="left:772.20px;top:127.30px;width:0.62px;height:0.7px;background:#7b8ae6;opacity:0.5"></div>
<div class="a" style="left:773.44px;top:127.30px;width:2.48px;height:0.7px;background:#3b3b3b;opacity:0.22"></div>
<div class="a" style="left:775.92px;top:127.30px;width:0.62px;height:0.7px;background:#7b8ae6;opacity:0.5"></div>
<div class="a" style="left:776.54px;top:127.30px;width:2.48px;height:0.7px;background:#38a858;opacity:0.5"></div>
<div class="a" style="left:779.02px;top:127.30px;width:0.62px;height:0.7px;background:#38a858;opacity:0.5"></div>
<div class="a" style="left:779.64px;top:127.30px;width:0.62px;height:0.7px;background:#38a858;opacity:0.5"></div>
<div class="a" style="left:770.96px;top:128.46px;width:0.62px;height:0.7px;background:#3b3b3b;opacity:0.22"></div>
<div class="a" style="left:772.20px;top:128.46px;width:0.62px;height:0.7px;background:#7b8ae6;opacity:0.5"></div>
<div class="a" style="left:773.44px;top:128.46px;width:2.48px;height:0.7px;background:#3b3b3b;opacity:0.22"></div>
<div class="a" style="left:775.92px;top:128.46px;width:0.62px;height:0.7px;background:#7b8ae6;opacity:0.5"></div>
<div class="a" style="left:776.54px;top:128.46px;width:1.86px;height:0.7px;background:#38a858;opacity:0.5"></div>
<div class="a" style="left:778.40px;top:128.46px;width:0.62px;height:0.7px;background:#38a858;opacity:0.5"></div>
<div class="a" style="left:779.02px;top:128.46px;width:0.62px;height:0.7px;background:#38a858;opacity:0.5"></div>
<div class="a" style="left:770.96px;top:129.62px;width:0.62px;height:0.7px;background:#3b3b3b;opacity:0.22"></div>
<div class="a" style="left:772.20px;top:129.62px;width:0.62px;height:0.7px;background:#7b8ae6;opacity:0.5"></div>
<div class="a" style="left:773.44px;top:129.62px;width:2.48px;height:0.7px;background:#3b3b3b;opacity:0.22"></div>
<div class="a" style="left:775.92px;top:129.62px;width:0.62px;height:0.7px;background:#7b8ae6;opacity:0.5"></div>
<div class="a" style="left:776.54px;top:129.62px;width:3.10px;height:0.7px;background:#38a858;opacity:0.5"></div>
<div class="a" style="left:779.64px;top:129.62px;width:0.62px;height:0.7px;background:#38a858;opacity:0.5"></div>
<div class="a" style="left:780.26px;top:129.62px;width:0.62px;height:0.7px;background:#38a858;opacity:0.5"></div>
<div class="a" style="left:770.96px;top:130.78px;width:0.62px;height:0.7px;background:#3b3b3b;opacity:0.22"></div>
<div class="a" style="left:772.20px;top:130.78px;width:0.62px;height:0.7px;background:#7b8ae6;opacity:0.5"></div>
<div class="a" style="left:773.44px;top:130.78px;width:2.48px;height:0.7px;background:#3b3b3b;opacity:0.22"></div>
<div class="a" style="left:775.92px;top:130.78px;width:0.62px;height:0.7px;background:#7b8ae6;opacity:0.5"></div>
<div class="a" style="left:776.54px;top:130.78px;width:3.72px;height:0.7px;background:#38a858;opacity:0.5"></div>
<div class="a" style="left:780.26px;top:130.78px;width:0.62px;height:0.7px;background:#38a858;opacity:0.5"></div>
<div class="a" style="left:780.88px;top:130.78px;width:0.62px;height:0.7px;background:#38a858;opacity:0.5"></div>
<div class="a" style="left:770.96px;top:133.10px;width:1.86px;height:0.7px;background:#3b3b3b;opacity:0.22"></div>
<div class="a" style="left:772.82px;top:133.10px;width:0.62px;height:0.7px;background:#7b8ae6;opacity:0.5"></div>
<div class="a" style="left:773.44px;top:133.10px;width:5.58px;height:0.7px;background:#38a858;opacity:0.5"></div>
<div class="a" style="left:779.02px;top:133.10px;width:0.62px;height:0.7px;background:#38a858;opacity:0.5"></div>
<div class="a" style="left:779.64px;top:133.10px;width:3.10px;height:0.7px;background:#3b3b3b;opacity:0.22"></div>
<div class="a" style="left:782.74px;top:133.10px;width:0.62px;height:0.7px;background:#7b8ae6;opacity:0.5"></div>
<div class="a" style="left:783.98px;top:133.10px;width:0.62px;height:0.7px;background:#9b6fe0;opacity:0.5"></div>
<div class="a" style="left:784.60px;top:133.10px;width:0.62px;height:0.7px;background:#3b3b3b;opacity:0.22"></div>
<div class="a" style="left:785.22px;top:133.10px;width:0.62px;height:0.7px;background:#7b8ae6;opacity:0.5"></div>
<div class="a" style="left:786.46px;top:133.10px;width:0.62px;height:0.7px;background:#3b3b3b;opacity:0.22"></div>
<div class="a" style="left:787.08px;top:133.10px;width:0.62px;height:0.7px;background:#9b6fe0;opacity:0.5"></div>
<div class="a" style="left:787.70px;top:133.10px;width:0.62px;height:0.7px;background:#7b8ae6;opacity:0.5"></div>
<div class="a" style="left:788.94px;top:133.10px;width:0.62px;height:0.7px;background:#9b6fe0;opacity:0.5"></div>
<div class="a" style="left:789.56px;top:133.10px;width:0.62px;height:0.7px;background:#3b3b3b;opacity:0.22"></div>
<div class="a" style="left:790.80px;top:133.10px;width:0.62px;height:0.7px;background:#7b8ae6;opacity:0.5"></div>
<div class="a" style="left:792.04px;top:133.10px;width:0.62px;height:0.7px;background:#3b3b3b;opacity:0.22"></div>
<div class="a" style="left:792.66px;top:133.10px;width:0.62px;height:0.7px;background:#7b8ae6;opacity:0.5"></div>
<div class="a" style="left:793.90px;top:133.10px;width:0.62px;height:0.7px;background:#3b3b3b;opacity:0.22"></div>
<div class="a" style="left:795.14px;top:133.10px;width:0.62px;height:0.7px;background:#7b8ae6;opacity:0.5"></div>
<div class="a" style="left:796.38px;top:133.10px;width:0.62px;height:0.7px;background:#3b3b3b;opacity:0.22"></div>
<div class="a" style="left:797.00px;top:133.10px;width:0.62px;height:0.7px;background:#9b6fe0;opacity:0.5"></div>
<div class="a" style="left:797.62px;top:133.10px;width:0.62px;height:0.7px;background:#7b8ae6;opacity:0.5"></div>
<div class="a" style="left:798.86px;top:133.10px;width:0.62px;height:0.7px;background:#9b6fe0;opacity:0.5"></div>
<div class="a" style="left:799.48px;top:133.10px;width:0.62px;height:0.7px;background:#c845bd;opacity:0.5"></div>
<div class="a" style="left:800.10px;top:133.10px;width:0.62px;height:0.7px;background:#7b8ae6;opacity:0.5"></div>
<div class="a" style="left:801.34px;top:133.10px;width:1.86px;height:0.7px;background:#c845bd;opacity:0.5"></div>
<div class="a" style="left:803.20px;top:133.10px;width:0.62px;height:0.7px;background:#7b8ae6;opacity:0.5"></div>
<div class="a" style="left:804.44px;top:133.10px;width:0.62px;height:0.7px;background:#c845bd;opacity:0.5"></div>
<div class="a" style="left:805.06px;top:133.10px;width:0.62px;height:0.7px;background:#9b6fe0;opacity:0.5"></div>
<div class="a" style="left:805.68px;top:133.10px;width:0.62px;height:0.7px;background:#7b8ae6;opacity:0.5"></div>
<div class="a" style="left:806.92px;top:133.10px;width:0.62px;height:0.7px;background:#c845bd;opacity:0.5"></div>
<div class="a" style="left:807.54px;top:133.10px;width:0.62px;height:0.7px;background:#38a858;opacity:0.5"></div>
<div class="a" style="left:770.96px;top:135.42px;width:8.68px;height:0.7px;background:#3b3b3b;opacity:0.22"></div>
<div class="a" style="left:780.26px;top:135.42px;width:0.62px;height:0.7px;background:#7b8ae6;opacity:0.5"></div>
<div class="a" style="left:781.50px;top:135.42px;width:10.54px;height:0.7px;background:#3b3b3b;opacity:0.22"></div>
<div class="a" style="left:792.04px;top:135.42px;width:0.62px;height:0.7px;background:#38a858;opacity:0.5"></div>
<div class="a" style="left:792.66px;top:135.42px;width:2.48px;height:0.7px;background:#3b3b3b;opacity:0.22"></div>
<div class="a" style="left:795.14px;top:135.42px;width:0.62px;height:0.7px;background:#7b8ae6;opacity:0.5"></div>
<div class="a" style="left:796.38px;top:135.42px;width:2.48px;height:0.7px;background:#3b3b3b;opacity:0.22"></div>
<div class="a" style="left:798.86px;top:135.42px;width:0.62px;height:0.7px;background:#38a858;opacity:0.5"></div>
<div class="a" style="left:770.96px;top:137.74px;width:1.86px;height:0.7px;background:#2a8fd6;opacity:0.5"></div>
<div class="a" style="left:773.44px;top:137.74px;width:0.62px;height:0.7px;background:#3b3b3b;opacity:0.22"></div>
<div class="a" style="left:774.68px;top:137.74px;width:1.24px;height:0.7px;background:#2a8fd6;opacity:0.5"></div>
<div class="a" style="left:776.54px;top:137.74px;width:3.10px;height:0.7px;background:#dc4660;opacity:0.5"></div>
<div class="a" style="left:779.64px;top:137.74px;width:0.62px;height:0.7px;background:#38a858;opacity:0.5"></div>
<div class="a" style="left:780.26px;top:137.74px;width:0.62px;height:0.7px;background:#c845bd;opacity:0.5"></div>
<div class="a" style="left:780.88px;top:137.74px;width:0.62px;height:0.7px;background:#7b8ae6;opacity:0.5"></div>
<div class="a" style="left:782.12px;top:137.74px;width:1.24px;height:0.7px;background:#c845bd;opacity:0.5"></div>
<div class="a" style="left:783.36px;top:137.74px;width:0.62px;height:0.7px;background:#38a858;opacity:0.5"></div>
<div class="a" style="left:783.98px;top:137.74px;width:0.62px;height:0.7px;background:#7b8ae6;opacity:0.5"></div>
<div class="a" style="left:773.44px;top:138.90px;width:0.62px;height:0.7px;background:#3b3b3b;opacity:0.22"></div>
<div class="a" style="left:774.68px;top:138.90px;width:0.62px;height:0.7px;background:#7b8ae6;opacity:0.5"></div>
<div class="a" style="left:775.92px;top:138.90px;width:8.68px;height:0.7px;background:#3b3b3b;opacity:0.22"></div>
<div class="a" style="left:784.60px;top:138.90px;width:0.62px;height:0.7px;background:#7b8ae6;opacity:0.5"></div>
<div class="a" style="left:785.22px;top:138.90px;width:2.48px;height:0.7px;background:#38a858;opacity:0.5"></div>
<div class="a" style="left:787.70px;top:138.90px;width:0.62px;height:0.7px;background:#38a858;opacity:0.5"></div>
<div class="a" style="left:788.32px;top:138.90px;width:0.62px;height:0.7px;background:#3b3b3b;opacity:0.22"></div>
<div class="a" style="left:788.94px;top:138.90px;width:0.62px;height:0.7px;background:#38a858;opacity:0.5"></div>
<div class="a" style="left:789.56px;top:138.90px;width:0.62px;height:0.7px;background:#7b8ae6;opacity:0.5"></div>
<div class="a" style="left:790.18px;top:138.90px;width:0.62px;height:0.7px;background:#3b3b3b;opacity:0.22"></div>
<div class="a" style="left:773.44px;top:140.06px;width:0.62px;height:0.7px;background:#3b3b3b;opacity:0.22"></div>
<div class="a" style="left:774.68px;top:140.06px;width:0.62px;height:0.7px;background:#7b8ae6;opacity:0.5"></div>
<div class="a" style="left:775.92px;top:140.06px;width:8.68px;height:0.7px;background:#3b3b3b;opacity:0.22"></div>
<div class="a" style="left:784.60px;top:140.06px;width:0.62px;height:0.7px;background:#7b8ae6;opacity:0.5"></div>
<div class="a" style="left:785.22px;top:140.06px;width:2.48px;height:0.7px;background:#38a858;opacity:0.5"></div>
<div class="a" style="left:787.70px;top:140.06px;width:0.62px;height:0.7px;background:#38a858;opacity:0.5"></div>
<div class="a" style="left:788.32px;top:140.06px;width:0.62px;height:0.7px;background:#3b3b3b;opacity:0.22"></div>
<div class="a" style="left:788.94px;top:140.06px;width:0.62px;height:0.7px;background:#38a858;opacity:0.5"></div>
<div class="a" style="left:789.56px;top:140.06px;width:0.62px;height:0.7px;background:#7b8ae6;opacity:0.5"></div>
<div class="a" style="left:790.18px;top:140.06px;width:0.62px;height:0.7px;background:#3b3b3b;opacity:0.22"></div>
<div class="a" style="left:773.44px;top:141.22px;width:1.86px;height:0.7px;background:#3b3b3b;opacity:0.22"></div>
<div class="a" style="left:775.30px;top:141.22px;width:0.62px;height:0.7px;background:#7b8ae6;opacity:0.5"></div>
<div class="a" style="left:775.92px;top:141.22px;width:3.72px;height:0.7px;background:#38a858;opacity:0.5"></div>
<div class="a" style="left:779.64px;top:141.22px;width:0.62px;height:0.7px;background:#38a858;opacity:0.5"></div>
<div class="a" style="left:780.26px;top:141.22px;width:3.10px;height:0.7px;background:#3b3b3b;opacity:0.22"></div>
<div class="a" style="left:783.36px;top:141.22px;width:0.62px;height:0.7px;background:#7b8ae6;opacity:0.5"></div>
<div class="a" style="left:784.60px;top:141.22px;width:0.62px;height:0.7px;background:#9b6fe0;opacity:0.5"></div>
<div class="a" style="left:785.22px;top:141.22px;width:0.62px;height:0.7px;background:#3b3b3b;opacity:0.22"></div>
<div class="a" style="left:785.84px;top:141.22px;width:0.62px;height:0.7px;background:#7b8ae6;opacity:0.5"></div>
<div class="a" style="left:787.08px;top:141.22px;width:0.62px;height:0.7px;background:#3b3b3b;opacity:0.22"></div>
<div class="a" style="left:787.70px;top:141.22px;width:0.62px;height:0.7px;background:#9b6fe0;opacity:0.5"></div>
<div class="a" style="left:788.32px;top:141.22px;width:0.62px;height:0.7px;background:#7b8ae6;opacity:0.5"></div>
<div class="a" style="left:789.56px;top:141.22px;width:0.62px;height:0.7px;background:#c845bd;opacity:0.5"></div>
<div class="a" style="left:790.18px;top:141.22px;width:0.62px;height:0.7px;background:#7b8ae6;opacity:0.5"></div>
<div class="a" style="left:791.42px;top:141.22px;width:0.62px;height:0.7px;background:#9b6fe0;opacity:0.5"></div>
<div class="a" style="left:792.04px;top:141.22px;width:0.62px;height:0.7px;background:#c845bd;opacity:0.5"></div>
<div class="a" style="left:792.66px;top:141.22px;width:0.62px;height:0.7px;background:#7b8ae6;opacity:0.5"></div>
<div class="a" style="left:793.90px;top:141.22px;width:1.86px;height:0.7px;background:#c845bd;opacity:0.5"></div>
<div class="a" style="left:795.76px;top:141.22px;width:0.62px;height:0.7px;background:#7b8ae6;opacity:0.5"></div>
<div class="a" style="left:797.00px;top:141.22px;width:1.86px;height:0.7px;background:#c845bd;opacity:0.5"></div>
<div class="a" style="left:798.86px;top:141.22px;width:0.62px;height:0.7px;background:#9b6fe0;opacity:0.5"></div>
<div class="a" style="left:799.48px;top:141.22px;width:0.62px;height:0.7px;background:#7b8ae6;opacity:0.5"></div>
<div class="a" style="left:800.72px;top:141.22px;width:0.62px;height:0.7px;background:#c845bd;opacity:0.5"></div>
<div class="a" style="left:801.34px;top:141.22px;width:0.62px;height:0.7px;background:#38a858;opacity:0.5"></div>
<div class="a" style="left:768.48px;top:143.54px;width:1.86px;height:0.7px;background:#3b3b3b;opacity:0.22"></div>
<div class="a" style="left:770.34px;top:143.54px;width:0.62px;height:0.7px;background:#7b8ae6;opacity:0.5"></div>
<div class="a" style="left:770.96px;top:143.54px;width:3.72px;height:0.7px;background:#38a858;opacity:0.5"></div>
<div class="a" style="left:774.68px;top:143.54px;width:0.62px;height:0.7px;background:#38a858;opacity:0.5"></div>
<div class="a" style="left:775.30px;top:143.54px;width:15.50px;height:0.7px;background:#b8932f;opacity:0.5"></div>
<div class="a" style="left:790.80px;top:143.54px;width:0.62px;height:0.7px;background:#7b8ae6;opacity:0.5"></div>
<div class="a" style="left:792.04px;top:143.54px;width:3.10px;height:0.7px;background:#3b3b3b;opacity:0.22"></div>
<div class="a" style="left:795.14px;top:143.54px;width:0.62px;height:0.7px;background:#38a858;opacity:0.5"></div>
<div class="a" style="left:768.48px;top:144.70px;width:6.82px;height:0.7px;background:#3b3b3b;opacity:0.22"></div>
<div class="a" style="left:775.92px;top:144.70px;width:0.62px;height:0.7px;background:#7b8ae6;opacity:0.5"></div>
<div class="a" style="left:777.16px;top:144.70px;width:4.96px;height:0.7px;background:#3b3b3b;opacity:0.22"></div>
<div class="a" style="left:782.12px;top:144.70px;width:0.62px;height:0.7px;background:#7b8ae6;opacity:0.5"></div>
<div class="a" style="left:782.74px;top:144.70px;width:4.34px;height:0.7px;background:#38a858;opacity:0.5"></div>
<div class="a" style="left:787.08px;top:144.70px;width:0.62px;height:0.7px;background:#38a858;opacity:0.5"></div>
<div class="a" style="left:787.70px;top:144.70px;width:3.10px;height:0.7px;background:#3b3b3b;opacity:0.22"></div>
<div class="a" style="left:790.80px;top:144.70px;width:0.62px;height:0.7px;background:#7b8ae6;opacity:0.5"></div>
<div class="a" style="left:792.04px;top:144.70px;width:4.34px;height:0.7px;background:#3a9ad6;opacity:0.5"></div>
<div class="a" style="left:796.38px;top:144.70px;width:0.62px;height:0.7px;background:#7b8ae6;opacity:0.5"></div>
<div class="a" style="left:797.00px;top:144.70px;width:0.62px;height:0.7px;background:#9b6fe0;opacity:0.5"></div>
<div class="a" style="left:797.62px;top:144.70px;width:5.58px;height:0.7px;background:#b8932f;opacity:0.5"></div>
<div class="a" style="left:803.20px;top:144.70px;width:0.62px;height:0.7px;background:#9b6fe0;opacity:0.5"></div>
<div class="a" style="left:803.82px;top:144.70px;width:0.62px;height:0.7px;background:#7b8ae6;opacity:0.5"></div>
<div class="a" style="left:805.06px;top:144.70px;width:10.54px;height:0.7px;background:#3a9ad6;opacity:0.5"></div>
<div class="a" style="left:815.60px;top:144.70px;width:0.62px;height:0.7px;background:#7b8ae6;opacity:0.5"></div>
<div class="a" style="left:816.22px;top:144.70px;width:3.10px;height:0.7px;background:#2a8fd6;opacity:0.5"></div>
<div class="a" style="left:819.32px;top:144.70px;width:0.62px;height:0.7px;background:#38a858;opacity:0.5"></div>
<div class="a" style="left:768.48px;top:145.86px;width:9.92px;height:0.7px;background:#3b3b3b;opacity:0.22"></div>
<div class="a" style="left:779.02px;top:145.86px;width:0.62px;height:0.7px;background:#7b8ae6;opacity:0.5"></div>
<div class="a" style="left:780.26px;top:145.86px;width:6.82px;height:0.7px;background:#3b3b3b;opacity:0.22"></div>
<div class="a" style="left:787.08px;top:145.86px;width:0.62px;height:0.7px;background:#38a858;opacity:0.5"></div>
<div class="a" style="left:787.70px;top:145.86px;width:0.62px;height:0.7px;background:#c845bd;opacity:0.5"></div>
<div class="a" style="left:788.32px;top:145.86px;width:0.62px;height:0.7px;background:#38a858;opacity:0.5"></div>
<div class="a" style="left:788.94px;top:145.86px;width:0.62px;height:0.7px;background:#38a858;opacity:0.5"></div>
<div class="a" style="left:789.56px;top:145.86px;width:11.16px;height:0.7px;background:#b8932f;opacity:0.5"></div>
<div class="a" style="left:800.72px;top:145.86px;width:0.62px;height:0.7px;background:#38a858;opacity:0.5"></div>
<div class="a" style="left:802.58px;top:145.86px;width:25.42px;height:0.7px;background:#a3a3a3;opacity:0.5"></div>
<div class="a" style="left:768.48px;top:148.18px;width:6.82px;height:0.7px;background:#3b3b3b;opacity:0.22"></div>
<div class="a" style="left:775.92px;top:148.18px;width:0.62px;height:0.7px;background:#7b8ae6;opacity:0.5"></div>
<div class="a" style="left:777.16px;top:148.18px;width:0.62px;height:0.7px;background:#38a858;opacity:0.5"></div>
<div class="a" style="left:777.78px;top:148.18px;width:1.86px;height:0.7px;background:#c845bd;opacity:0.5"></div>
<div class="a" style="left:779.64px;top:148.18px;width:0.62px;height:0.7px;background:#7b8ae6;opacity:0.5"></div>
<div class="a" style="left:780.88px;top:148.18px;width:1.86px;height:0.7px;background:#c845bd;opacity:0.5"></div>
<div class="a" style="left:782.74px;top:148.18px;width:0.62px;height:0.7px;background:#38a858;opacity:0.5"></div>
<div class="a" style="left:768.48px;top:149.34px;width:2.48px;height:0.7px;background:#3b3b3b;opacity:0.22"></div>
<div class="a" style="left:771.58px;top:149.34px;width:0.62px;height:0.7px;background:#7b8ae6;opacity:0.5"></div>
<div class="a" style="left:772.82px;top:149.34px;width:1.86px;height:0.7px;background:#3b3b3b;opacity:0.22"></div>
<div class="a" style="left:774.68px;top:149.34px;width:0.62px;height:0.7px;background:#7b8ae6;opacity:0.5"></div>
<div class="a" style="left:775.30px;top:149.34px;width:12.40px;height:0.7px;background:#b5614f;opacity:0.5"></div>
<div class="a" style="left:768.48px;top:150.50px;width:5.58px;height:0.7px;background:#3b3b3b;opacity:0.22"></div>
<div class="a" style="left:774.68px;top:150.50px;width:0.62px;height:0.7px;background:#7b8ae6;opacity:0.5"></div>
<div class="a" style="left:775.92px;top:150.50px;width:0.62px;height:0.7px;background:#c845bd;opacity:0.5"></div>
<div class="a" style="left:768.48px;top:151.66px;width:3.10px;height:0.7px;background:#3b3b3b;opacity:0.22"></div>
<div class="a" style="left:772.20px;top:151.66px;width:0.62px;height:0.7px;background:#7b8ae6;opacity:0.5"></div>
<div class="a" style="left:773.44px;top:151.66px;width:0.62px;height:0.7px;background:#38a858;opacity:0.5"></div>
<div class="a" style="left:774.06px;top:151.66px;width:0.62px;height:0.7px;background:#c845bd;opacity:0.5"></div>
<div class="a" style="left:774.68px;top:151.66px;width:0.62px;height:0.7px;background:#7b8ae6;opacity:0.5"></div>
<div class="a" style="left:775.92px;top:151.66px;width:0.62px;height:0.7px;background:#c845bd;opacity:0.5"></div>
<div class="a" style="left:776.54px;top:151.66px;width:0.62px;height:0.7px;background:#7b8ae6;opacity:0.5"></div>
<div class="a" style="left:777.78px;top:151.66px;width:0.62px;height:0.7px;background:#c845bd;opacity:0.5"></div>
<div class="a" style="left:778.40px;top:151.66px;width:0.62px;height:0.7px;background:#38a858;opacity:0.5"></div>
<div class="a" style="left:768.48px;top:152.82px;width:5.58px;height:0.7px;background:#3b3b3b;opacity:0.22"></div>
<div class="a" style="left:774.68px;top:152.82px;width:0.62px;height:0.7px;background:#7b8ae6;opacity:0.5"></div>
<div class="a" style="left:775.92px;top:152.82px;width:0.62px;height:0.7px;background:#c845bd;opacity:0.5"></div>
<div class="a" style="left:768.48px;top:153.98px;width:3.10px;height:0.7px;background:#3b3b3b;opacity:0.22"></div>
<div class="a" style="left:772.20px;top:153.98px;width:0.62px;height:0.7px;background:#7b8ae6;opacity:0.5"></div>
<div class="a" style="left:773.44px;top:153.98px;width:1.86px;height:0.7px;background:#3b3b3b;opacity:0.22"></div>
<div class="a" style="left:775.30px;top:153.98px;width:0.62px;height:0.7px;background:#7b8ae6;opacity:0.5"></div>
<div class="a" style="left:775.92px;top:153.98px;width:4.34px;height:0.7px;background:#38a858;opacity:0.5"></div>
<div class="a" style="left:780.26px;top:153.98px;width:0.62px;height:0.7px;background:#38a858;opacity:0.5"></div>
<div class="a" style="left:780.88px;top:153.98px;width:3.10px;height:0.7px;background:#3b3b3b;opacity:0.22"></div>
<div class="a" style="left:783.98px;top:153.98px;width:0.62px;height:0.7px;background:#7b8ae6;opacity:0.5"></div>
<div class="a" style="left:785.22px;top:153.98px;width:9.92px;height:0.7px;background:#3b3b3b;opacity:0.22"></div>
<div class="a" style="left:795.14px;top:153.98px;width:0.62px;height:0.7px;background:#7b8ae6;opacity:0.5"></div>
<div class="a" style="left:796.38px;top:153.98px;width:6.82px;height:0.7px;background:#3b3b3b;opacity:0.22"></div>
<div class="a" style="left:803.20px;top:153.98px;width:0.62px;height:0.7px;background:#7b8ae6;opacity:0.5"></div>
<div class="a" style="left:804.44px;top:153.98px;width:2.48px;height:0.7px;background:#3b3b3b;opacity:0.22"></div>
<div class="a" style="left:806.92px;top:153.98px;width:0.62px;height:0.7px;background:#7b8ae6;opacity:0.5"></div>
<div class="a" style="left:808.16px;top:153.98px;width:5.58px;height:0.7px;background:#3b3b3b;opacity:0.22"></div>
<div class="a" style="left:813.74px;top:153.98px;width:0.62px;height:0.7px;background:#7b8ae6;opacity:0.5"></div>
<div class="a" style="left:814.98px;top:153.98px;width:3.10px;height:0.7px;background:#3b3b3b;opacity:0.22"></div>
<div class="a" style="left:818.08px;top:153.98px;width:0.62px;height:0.7px;background:#7b8ae6;opacity:0.5"></div>
<div class="a" style="left:819.32px;top:153.98px;width:5.58px;height:0.7px;background:#3b3b3b;opacity:0.22"></div>
<div class="a" style="left:824.90px;top:153.98px;width:0.62px;height:0.7px;background:#7b8ae6;opacity:0.5"></div>
<div class="a" style="left:826.14px;top:153.98px;width:1.86px;height:0.7px;background:#3b3b3b;opacity:0.22"></div>
<div class="a" style="left:828.00px;top:153.98px;width:0.62px;height:0.7px;background:#7b8ae6;opacity:0.5"></div>
<div class="a" style="left:828.62px;top:153.98px;width:4.34px;height:0.7px;background:#b5614f;opacity:0.5"></div>
<div class="a" style="left:832.96px;top:153.98px;width:0.62px;height:0.7px;background:#38a858;opacity:0.5"></div>
<div class="a" style="left:768.48px;top:156.30px;width:1.86px;height:0.7px;background:#3b3b3b;opacity:0.22"></div>
<div class="a" style="left:770.34px;top:156.30px;width:0.62px;height:0.7px;background:#7b8ae6;opacity:0.5"></div>
<div class="a" style="left:770.96px;top:156.30px;width:3.72px;height:0.7px;background:#38a858;opacity:0.5"></div>
<div class="a" style="left:774.68px;top:156.30px;width:0.62px;height:0.7px;background:#38a858;opacity:0.5"></div>
<div class="a" style="left:775.30px;top:156.30px;width:15.50px;height:0.7px;background:#b8932f;opacity:0.5"></div>
<div class="a" style="left:790.80px;top:156.30px;width:0.62px;height:0.7px;background:#7b8ae6;opacity:0.5"></div>
<div class="a" style="left:792.04px;top:156.30px;width:3.10px;height:0.7px;background:#3b3b3b;opacity:0.22"></div>
<div class="a" style="left:795.14px;top:156.30px;width:0.62px;height:0.7px;background:#38a858;opacity:0.5"></div>
<div class="a" style="left:768.48px;top:158.62px;width:1.86px;height:0.7px;background:#3b3b3b;opacity:0.22"></div>
<div class="a" style="left:770.96px;top:158.62px;width:0.62px;height:0.7px;background:#7b8ae6;opacity:0.5"></div>
<div class="a" style="left:772.20px;top:158.62px;width:1.86px;height:0.7px;background:#3b3b3b;opacity:0.22"></div>
<div class="a" style="left:774.06px;top:158.62px;width:0.62px;height:0.7px;background:#7b8ae6;opacity:0.5"></div>
<div class="a" style="left:774.68px;top:158.62px;width:4.34px;height:0.7px;background:#38a858;opacity:0.5"></div>
<div class="a" style="left:779.02px;top:158.62px;width:0.62px;height:0.7px;background:#38a858;opacity:0.5"></div>
<div class="a" style="left:779.64px;top:158.62px;width:0.62px;height:0.7px;background:#c845bd;opacity:0.5"></div>
<div class="a" style="left:780.26px;top:158.62px;width:0.62px;height:0.7px;background:#38a858;opacity:0.5"></div>
<div class="a" style="left:768.48px;top:159.78px;width:1.24px;height:0.7px;background:#3b3b3b;opacity:0.22"></div>
<div class="a" style="left:770.34px;top:159.78px;width:1.86px;height:0.7px;background:#3b3b3b;opacity:0.22"></div>
<div class="a" style="left:772.82px;top:159.78px;width:0.62px;height:0.7px;background:#7b8ae6;opacity:0.5"></div>
<div class="a" style="left:773.44px;top:159.78px;width:0.62px;height:0.7px;background:#7b8ae6;opacity:0.5"></div>
<div class="a" style="left:774.68px;top:159.78px;width:1.24px;height:0.7px;background:#c845bd;opacity:0.5"></div>
<div class="a" style="left:775.92px;top:159.78px;width:0.62px;height:0.7px;background:#7b8ae6;opacity:0.5"></div>
<div class="a" style="left:770.96px;top:160.94px;width:3.10px;height:0.7px;background:#3b3b3b;opacity:0.22"></div>
<div class="a" style="left:766.00px;top:163.26px;width:1.86px;height:0.7px;background:#3b3b3b;opacity:0.22"></div>
<div class="a" style="left:767.86px;top:163.26px;width:0.62px;height:0.7px;background:#7b8ae6;opacity:0.5"></div>
<div class="a" style="left:768.48px;top:163.26px;width:4.34px;height:0.7px;background:#38a858;opacity:0.5"></div>
<div class="a" style="left:772.82px;top:163.26px;width:0.62px;height:0.7px;background:#38a858;opacity:0.5"></div>
<div class="a" style="left:773.44px;top:163.26px;width:0.62px;height:0.7px;background:#38a858;opacity:0.5"></div>
<div class="a" style="left:766.00px;top:164.42px;width:1.86px;height:0.7px;background:#3b3b3b;opacity:0.22"></div>
<div class="a" style="left:767.86px;top:164.42px;width:0.62px;height:0.7px;background:#7b8ae6;opacity:0.5"></div>
<div class="a" style="left:768.48px;top:164.42px;width:10.54px;height:0.7px;background:#38a858;opacity:0.5"></div>
<div class="a" style="left:779.02px;top:164.42px;width:0.62px;height:0.7px;background:#38a858;opacity:0.5"></div>
<div class="a" style="left:779.64px;top:164.42px;width:0.62px;height:0.7px;background:#38a858;opacity:0.5"></div>
<!-- panel -->
<div class="a" style="left:160px;top:375.5px;width:668px;height:84.5px;background:#f9f9f9"></div>
<div class="a" style="left:160px;top:374.8px;width:668px;height:1px;background:#e2e2e2"></div>
<!-- terminal dark block -->
<div class="a" style="left:260px;top:404.5px;width:366px;height:45.5px;background:#2d2d2d"></div>
<div class="a" style="left:159px;top:30px;width:1px;height:430px;background:#e0e0e0"></div>
<!-- status bar -->
<div class="a" style="left:0;top:460px;width:828px;height:13px;background:#e9e9e9"></div>
<div class="a" style="left:0;top:460px;width:828px;height:1.1px;background:#55b0e2"></div>
<svg class="a" style="left:11px;top:2px;" width="9" height="9" viewBox="0 0 15 15"><path d="M11.2 8.4c0-1.7 1.4-2.5 1.5-2.6-.8-1.2-2-1.3-2.5-1.4-1-.1-2 .6-2.5.6s-1.3-.6-2.2-.6C4.400 4.500 3.300 5.100 2.700 6.100c-1.200 2.100-.3 5.200.9 6.900.6.800 1.300 1.800 2.200 1.700.9 0 1.200-.6 2.300-.6s1.400.6 2.300.5c.9 0 1.500-.9 2.100-1.700.7-1 .9-1.900.9-2-.1 0-1.900-.7-1.900-2.500zM9.500 3.300c.5-.6.800-1.400.7-2.200-.7 0-1.500.5-2 1.100-.4.500-.8 1.300-.7 2.100.8.100 1.500-.4 2-1z" fill="#111"/></svg>
<div class="t" style="left:30.80px;top:2.95px;font-size:7.7px;height:7.7px;line-height:7.7px;color:#141414;font-weight:bold;font-style:normal;font-family:'Liberation Sans',sans-serif;">Code</div>
<div class="t" style="left:61.70px;top:2.90px;font-size:7.8px;height:7.8px;line-height:7.8px;color:#141414;font-weight:normal;font-style:normal;font-family:'Liberation Sans',sans-serif;">File</div>
<div class="t" style="left:85.90px;top:2.90px;font-size:7.8px;height:7.8px;line-height:7.8px;color:#141414;font-weight:normal;font-style:normal;font-family:'Liberation Sans',sans-serif;">Edit</div>
<div class="t" style="left:111.30px;top:2.90px;font-size:7.8px;height:7.8px;line-height:7.8px;color:#141414;font-weight:normal;font-style:normal;font-family:'Liberation Sans',sans-serif;">Selection</div>
<div class="t" style="left:155.50px;top:2.90px;font-size:7.8px;height:7.8px;line-height:7.8px;color:#141414;font-weight:normal;font-style:normal;font-family:'Liberation Sans',sans-serif;">View</div>
<div class="t" style="left:184.00px;top:2.90px;font-size:7.8px;height:7.8px;line-height:7.8px;color:#141414;font-weight:normal;font-style:normal;font-family:'Liberation Sans',sans-serif;">Go</div>
<div class="t" style="left:205.70px;top:2.90px;font-size:7.8px;height:7.8px;line-height:7.8px;color:#141414;font-weight:normal;font-style:normal;font-family:'Liberation Sans',sans-serif;">Run</div>
<div class="t" style="left:231.50px;top:2.90px;font-size:7.8px;height:7.8px;line-height:7.8px;color:#141414;font-weight:normal;font-style:normal;font-family:'Liberation Sans',sans-serif;">Terminal</div>
<div class="t" style="left:272.90px;top:2.90px;font-size:7.8px;height:7.8px;line-height:7.8px;color:#141414;font-weight:normal;font-style:normal;font-family:'Liberation Sans',sans-serif;">Window</div>
<div class="t" style="left:312.40px;top:2.90px;font-size:7.8px;height:7.8px;line-height:7.8px;color:#141414;font-weight:normal;font-style:normal;font-family:'Liberation Sans',sans-serif;">Help</div>
<svg class="a" style="left:638.5px;top:3px;" width="16" height="8" viewBox="0 0 16 8"><rect x=".6" y=".6" width="12.8" height="6.4" rx="1.8" fill="#2b2b2b" stroke="#5a6a78" stroke-width=".7"/><path d="M14.2 2.6v2.4" stroke="#6a7a88" stroke-width="1"/></svg>
<svg class="a" style="left:663.5px;top:2.2px;" width="11" height="9" viewBox="0 0 11 9"><path d="M1 3.4a6.3 6.3 0 0 1 9 0" stroke="#111" stroke-width="1.35" fill="none" stroke-linecap="round"/><path d="M2.8 5.2a3.7 3.7 0 0 1 5.4 0" stroke="#111" stroke-width="1.35" fill="none" stroke-linecap="round"/><circle cx="5.5" cy="7.4" r="1.05" fill="#111"/></svg>
<svg class="a" style="left:684.5px;top:2.5px;" width="9" height="9" viewBox="0 0 9 9"><circle cx="3.7" cy="3.7" r="2.8" stroke="#1a1a1a" stroke-width="1" fill="none"/><path d="M5.8 5.8L8.3 8.3" stroke="#1a1a1a" stroke-width="1.2" stroke-linecap="round"/></svg>
<svg class="a" style="left:704px;top:2.5px;" width="9" height="9" viewBox="0 0 9 9"><rect x=".4" y=".6" width="8.2" height="3.5" rx="1.75" fill="#2a2a2a"/><circle cx="6.6" cy="2.35" r="1.1" fill="#cfd8e0"/><rect x=".4" y="4.9" width="8.2" height="3.5" rx="1.75" fill="#2a2a2a"/><circle cx="2.4" cy="6.65" r="1.1" fill="#cfd8e0"/></svg>
<svg class="a" style="left:721.5px;top:2px;" width="10" height="10" viewBox="0 0 10 10"><circle cx="5" cy="5" r="4.4" fill="#e8eef8"/><path d="M5 .6A4.4 4.4 0 0 0 .9 6.6L3 5.6A2.2 2.2 0 0 1 5 2.8z" fill="#e86a8a"/><path d="M.9 6.6A4.4 4.4 0 0 0 9.2 6.3L7.1 5.6A2.2 2.2 0 0 1 3 5.6z" fill="#4ab8d8"/><path d="M9.2 6.3A4.4 4.4 0 0 0 5 .6V2.8A2.2 2.2 0 0 1 7.1 5.6z" fill="#8aa0e8"/><circle cx="5" cy="5" r="2" fill="#f4f6fb"/></svg>
<div class="t" style="left:739.80px;top:2.90px;font-size:7.8px;height:7.8px;line-height:7.8px;color:#141414;font-weight:normal;font-style:normal;font-family:'Liberation Sans',sans-serif;">Thu Jun 22</div>
<div class="t" style="left:783.80px;top:2.90px;font-size:7.8px;height:7.8px;line-height:7.8px;color:#141414;font-weight:normal;font-style:normal;font-family:'Liberation Sans',sans-serif;">10:06 PM</div>
<div class="a" style="left:4.25px;top:19.1px;width:7.2px;height:7.2px;border-radius:50%;background:#f9544f"></div>
<div class="a" style="left:15.80px;top:19.1px;width:7.2px;height:7.2px;border-radius:50%;background:#f8bd2e"></div>
<div class="a" style="left:27.50px;top:19.1px;width:7.2px;height:7.2px;border-radius:50%;background:#3fb44b"></div>
<div class="t" style="left:373.60px;top:19.44px;font-size:7.12px;height:7.12px;line-height:7.12px;color:#474747;font-weight:normal;font-style:normal;font-family:'Liberation Sans',sans-serif;">main.py — Face Recognition</div>
<svg class="a" style="left:778.5px;top:18px;" width="9" height="9" viewBox="0 0 9 9"><rect x=".6" y=".6" width="7.8" height="7.8" rx="1.4" fill="none" stroke="#4a4a4a" stroke-width=".8"/><rect x=".6" y=".6" width="3" height="7.8" fill="#4a4a4a"/></svg>
<svg class="a" style="left:793.2px;top:18px;" width="9" height="9" viewBox="0 0 9 9"><rect x=".6" y=".6" width="7.8" height="7.8" rx="1.4" fill="none" stroke="#4a4a4a" stroke-width=".8"/><rect x=".6" y="5.4" width="7.8" height="3" fill="#4a4a4a"/></svg>
<svg class="a" style="left:808px;top:18px;" width="9" height="9" viewBox="0 0 9 9"><rect x=".6" y=".6" width="7.8" height="7.8" rx="1.4" fill="none" stroke="#4a4a4a" stroke-width=".8"/><path d="M5.5 .6v7.8" stroke="#4a4a4a" stroke-width=".8"/></svg>
<svg class="a" style="left:823.5px;top:18px;" width="9" height="9" viewBox="0 0 9 9"><rect x=".6" y=".6" width="7.8" height="7.8" rx="1.4" fill="none" stroke="#4a4a4a" stroke-width=".8"/><path d="M3.5 .6v7.8" stroke="#4a4a4a" stroke-width=".8"/></svg>
<svg class="a" style="left:7px;top:36.5px;" width="14" height="14" viewBox="0 0 14 14"><path d="M5.2 1.2h4.6l2.6 2.6v6.4a.9.9 0 0 1-.9.9H5.2a.9.9 0 0 1-.9-.9V2.1a.9.9 0 0 1 .9-.9z" fill="none" stroke="#3d3d3d" stroke-width="1.2"/><path d="M4.3 3.6H2.6a.9.9 0 0 0-.9.9v7.8a.9.9 0 0 0 .9.9h5.9a.9.9 0 0 0 .9-.9v-1.1" fill="none" stroke="#3d3d3d" stroke-width="1.2"/></svg>
<svg class="a" style="left:6px;top:63px;" width="16" height="16" viewBox="0 0 16 16"><circle cx="10" cy="7.4" r="4.3" fill="none" stroke="#8b8b8b" stroke-width="1.05"/><path d="M7 10.5L2.2 15.2" stroke="#8b8b8b" stroke-width="1.15" stroke-linecap="round"/></svg>
<svg class="a" style="left:6px;top:90px;" width="16" height="17" viewBox="0 0 16 17"><circle cx="4.6" cy="3.3" r="2" fill="none" stroke="#8b8b8b" stroke-width=".9"/><circle cx="4.6" cy="13.8" r="2" fill="none" stroke="#8b8b8b" stroke-width=".9"/><circle cx="11.2" cy="7.4" r="2" fill="none" stroke="#8b8b8b" stroke-width=".9"/><path d="M4.6 5.3v6.5M11.2 9.4c0 2.2-3.2 2.1-5.1 3.1" fill="none" stroke="#8b8b8b" stroke-width="1"/></svg>
<svg class="a" style="left:6px;top:119.5px;" width="15" height="15" viewBox="0 0 15 15"><path d="M6.3 5.6V1.6L13.8 6.8 8.6 10.4" fill="none" stroke="#8b8b8b" stroke-width="1.05" stroke-linejoin="round"/><path d="M2.4 9.3a2.1 2.1 0 0 1 4.2 0v2.3a2.1 2.1 0 0 1-4.2 0z" fill="none" stroke="#8b8b8b" stroke-width=".95"/><path d="M2.4 10.3H.9M6.6 10.3h1.5M2.6 12.4l-1.3 1M6.4 12.4l1.3 1M3.2 7.6l-1-1M5.8 7.6l1-1M2.4 9.2h4.2" stroke="#8b8b8b" stroke-width=".8"/></svg>
<svg class="a" style="left:7px;top:147px;" width="14" height="15" viewBox="0 0 14 15"><rect x="1" y="5" width="4.3" height="4.3" fill="none" stroke="#8b8b8b" stroke-width="1.1"/><rect x="1" y="9.3" width="4.3" height="4.3" fill="none" stroke="#8b8b8b" stroke-width="1.1"/><rect x="5.3" y="9.3" width="4.3" height="4.3" fill="none" stroke="#8b8b8b" stroke-width="1.1"/><rect x="8.2" y="1" width="4.5" height="4.5" rx=".5" fill="none" stroke="#8b8b8b" stroke-width="1.1"/></svg>
<svg class="a" style="left:8px;top:175px;" width="12" height="14" viewBox="0 0 12 14"><path d="M4.2 1.2h3.6M4.8 1.2v4.5L1.2 12.3h9.6L7.2 5.7V1.2" fill="none" stroke="#8b8b8b" stroke-width="1.1" stroke-linejoin="round"/><path d="M3 9h6" stroke="#8b8b8b" stroke-width="1"/></svg>
<svg class="a" style="left:6.5px;top:410.5px;" width="15" height="15" viewBox="0 0 15 15"><circle cx="7.5" cy="7.5" r="6.6" fill="none" stroke="#8b8b8b" stroke-width="1.1"/><circle cx="7.5" cy="5.6" r="2.4" fill="none" stroke="#8b8b8b" stroke-width="1.1"/><path d="M3.2 12.2c.8-2.2 2.300-3 4.3-3s3.5.8 4.3 3" fill="none" stroke="#8b8b8b" stroke-width="1.1"/></svg>
<svg class="a" style="left:6.5px;top:438.5px;" width="15" height="15" viewBox="0 0 15 15"><path d="M12.54 8.30 L13.98 9.22 L13.29 10.87 L11.63 10.50 L10.50 11.63 L10.87 13.29 L9.22 13.98 L8.30 12.54 L6.70 12.54 L5.78 13.98 L4.13 13.29 L4.50 11.63 L3.37 10.50 L1.71 10.87 L1.02 9.22 L2.46 8.30 L2.46 6.70 L1.02 5.78 L1.71 4.13 L3.37 4.50 L4.50 3.37 L4.13 1.71 L5.78 1.02 L6.70 2.46 L8.30 2.46 L9.22 1.02 L10.87 1.71 L10.50 3.37 L11.63 4.50 L13.29 4.13 L13.98 5.78 L12.54 6.70Z" fill="none" stroke="#8b8b8b" stroke-width="1" stroke-linejoin="round"/><circle cx="7.5" cy="7.5" r="1.9" fill="none" stroke="#8b8b8b" stroke-width="1"/></svg>
<div class="t" style="left:39.20px;top:37.60px;font-size:6.4px;height:6.4px;line-height:6.4px;color:#5a5a5a;font-weight:normal;font-style:normal;font-family:'Liberation Sans',sans-serif;letter-spacing:-0.2px">EXPLORER</div>
<svg class="a" style="left:141.5px;top:39px;" width="10" height="3" viewBox="0 0 10 3"><circle cx="1.3" cy="1.5" r=".75" fill="#555"/><circle cx="4.8" cy="1.5" r=".75" fill="#555"/><circle cx="8.3" cy="1.5" r=".75" fill="#555"/></svg>
<svg class="a" style="left:29.6px;top:54.5px;" width="8" height="6" viewBox="0 0 8 6"><path d="M.8 1.2l3 3 3-3" fill="none" stroke="#555" stroke-width=".9"/></svg>
<div class="t" style="left:39.10px;top:54.17px;font-size:6.45px;height:6.45px;line-height:6.45px;color:#383838;font-weight:bold;font-style:normal;font-family:'Liberation Sans',sans-serif;letter-spacing:0.0px;-webkit-text-stroke:0">FACE RECOGNITION</div>
<svg class="a" style="left:46.9px;top:64.2px;" width="10" height="10" viewBox="0 0 16 16"><path d="M8 1.2c-3.2 0-3 1.4-3 1.4v1.5h3.1v.5H3.7S1.6 4.4 1.6 7.7s1.8 3.2 1.8 3.2h1.1V9.3s-.1-1.8 1.8-1.8h3.1s1.7 0 1.7-1.7V2.9S11.4 1.200 8 1.2z" fill="#3b77a8"/><path d="M8.1 14.8c3.2 0 3-1.4 3-1.4v-1.5H8v-.5h4.3s2.1.2 2.1-3.1-1.8-3.2-1.8-3.2h-1.1v1.6s.1 1.8-1.8 1.8H6.6s-1.7 0-1.7 1.7v2.9s-.3 1.7 3.2 1.7z" fill="#f5c73f"/></svg>
<div class="t" style="left:59.90px;top:65.73px;font-size:7.74px;height:7.74px;line-height:7.74px;color:#2a2a2a;font-weight:normal;font-style:normal;font-family:'Liberation Sans',sans-serif;">main.py</div>
<svg class="a" style="left:47.5px;top:76.8px;" width="9" height="11" viewBox="0 0 9 11"><path d="M1 .6h4.3l2.8 2.8v6.9H1z" fill="#f0f0f0" stroke="#c0c0c0" stroke-width=".7"/><path d="M5.3 .6v2.8h2.8" fill="none" stroke="#c8c8c8" stroke-width=".6"/></svg>
<div class="t" style="left:59.90px;top:78.08px;font-size:7.85px;height:7.85px;line-height:7.85px;color:#2a2a2a;font-weight:normal;font-style:normal;font-family:'Liberation Sans',sans-serif;">shape_predictor_68_face_...</div>
<svg class="a" style="left:30.5px;top:437.5px;" width="6" height="7" viewBox="0 0 6 7"><path d="M1.5 1l2.5 2.5L1.5 6" fill="none" stroke="#444" stroke-width=".9"/></svg>
<div class="t" style="left:39.30px;top:438.97px;font-size:6.45px;height:6.45px;line-height:6.45px;color:#383838;font-weight:bold;font-style:normal;font-family:'Liberation Sans',sans-serif;letter-spacing:0.0px;-webkit-text-stroke:0">OUTLINE</div>
<svg class="a" style="left:30.5px;top:450.5px;" width="6" height="7" viewBox="0 0 6 7"><path d="M1.5 1l2.5 2.5L1.5 6" fill="none" stroke="#444" stroke-width=".9"/></svg>
<div class="t" style="left:39.30px;top:451.77px;font-size:6.45px;height:6.45px;line-height:6.45px;color:#383838;font-weight:bold;font-style:normal;font-family:'Liberation Sans',sans-serif;letter-spacing:0.0px;-webkit-text-stroke:0">TIMELINE</div>
<svg class="a" style="left:165px;top:35.5px;" width="11" height="10" viewBox="0 0 11 10"><path d="M8.7 .9L1 6.9M8.7 9.1L4.4 5.7M2.9 4.5L1 3" stroke="#3396e0" stroke-width="1.5" stroke-linecap="round"/><path d="M8.7 .6v8.8" stroke="#2a8ad8" stroke-width="2.2" stroke-linecap="round"/></svg>
<div class="t" style="left:178.80px;top:36.80px;font-size:7.6px;height:7.6px;line-height:7.6px;color:#8a8a8a;font-weight:normal;font-style:italic;font-family:'Liberation Sans',sans-serif;">Welcome</div>
<svg class="a" style="left:234.8px;top:36px;" width="9" height="9" viewBox="0 0 16 16"><path d="M8 1.2c-3.2 0-3 1.4-3 1.4v1.5h3.1v.5H3.7S1.6 4.4 1.6 7.7s1.8 3.2 1.8 3.2h1.1V9.3s-.1-1.8 1.8-1.8h3.1s1.7 0 1.7-1.7V2.9S11.4 1.200 8 1.2z" fill="#3b77a8"/><path d="M8.1 14.8c3.2 0 3-1.4 3-1.4v-1.5H8v-.5h4.3s2.1.2 2.1-3.1-1.8-3.2-1.8-3.2h-1.1v1.6s.1 1.8-1.8 1.8H6.6s-1.7 0-1.7 1.7v2.9s-.3 1.7 3.2 1.7z" fill="#f5c73f"/></svg>
<div class="t" style="left:247.50px;top:36.77px;font-size:7.65px;height:7.65px;line-height:7.65px;color:#2e2e2e;font-weight:normal;font-style:normal;font-family:'Liberation Sans',sans-serif;">main.py</div>
<svg class="a" style="left:285.5px;top:37px;" width="7" height="7" viewBox="0 0 7 7"><path d="M1 1l5 5M6 1L1 6" stroke="#444" stroke-width="1"/></svg>
<svg class="a" style="left:785.5px;top:36.2px;" width="8" height="9" viewBox="0 0 8 9"><path d="M1 .9l6 3.6L1 8.1z" fill="none" stroke="#555" stroke-width=".75" stroke-linejoin="round"/></svg>
<svg class="a" style="left:796px;top:38.5px;" width="5" height="4" viewBox="0 0 5 4"><path d="M.6 .8l1.9 1.9L4.400 .8" fill="none" stroke="#777" stroke-width=".7"/></svg>
<svg class="a" style="left:807.5px;top:36.5px;" width="9" height="9" viewBox="0 0 9 9"><rect x=".6" y=".6" width="7.8" height="7.8" rx="1.2" fill="none" stroke="#555" stroke-width=".9"/><path d="M4.5 .6v7.8" stroke="#555" stroke-width=".9"/></svg>
<svg class="a" style="left:821px;top:39px;" width="10" height="3" viewBox="0 0 10 3"><circle cx="1.3" cy="1.5" r=".75" fill="#555"/><circle cx="4.8" cy="1.5" r=".75" fill="#555"/><circle cx="8.3" cy="1.5" r=".75" fill="#555"/></svg>
<svg class="a" style="left:169.4px;top:52.6px;" width="8.6" height="8.6" viewBox="0 0 16 16"><path d="M8 1.2c-3.2 0-3 1.4-3 1.4v1.5h3.1v.5H3.7S1.6 4.4 1.6 7.7s1.8 3.2 1.8 3.2h1.1V9.3s-.1-1.8 1.8-1.8h3.1s1.7 0 1.7-1.7V2.9S11.4 1.200 8 1.2z" fill="#3b77a8"/><path d="M8.1 14.8c3.2 0 3-1.4 3-1.4v-1.5H8v-.5h4.3s2.1.2 2.1-3.1-1.8-3.2-1.8-3.2h-1.1v1.6s.1 1.8-1.8 1.8H6.6s-1.7 0-1.7 1.7v2.9s-.3 1.7 3.2 1.7z" fill="#f5c73f"/></svg>
<div class="t" style="left:181.90px;top:53.16px;font-size:7.68px;height:7.68px;line-height:7.68px;color:#777;font-weight:normal;font-style:normal;font-family:'Liberation Sans',sans-serif;">main.py</div>
<svg class="a" style="left:211.8px;top:53.8px;" width="4" height="6" viewBox="0 0 4 6"><path d="M.7.7l2.2 2.2L.7 5.1" fill="none" stroke="#888" stroke-width=".7"/></svg>
<div class="t" style="left:218.20px;top:52.90px;font-size:7.2px;height:7.2px;line-height:7.2px;color:#888;font-weight:normal;font-style:normal;font-family:'Liberation Sans',sans-serif;">...</div>
<div class="t" style="left:171.20px;top:383.00px;font-size:6.4px;height:6.4px;line-height:6.4px;color:#8a8a8a;font-weight:normal;font-style:normal;font-family:'Liberation Sans',sans-serif;">PROBLEMS</div>
<div class="t" style="left:219.80px;top:383.00px;font-size:6.4px;height:6.4px;line-height:6.4px;color:#8a8a8a;font-weight:normal;font-style:normal;font-family:'Liberation Sans',sans-serif;">OUTPUT</div>
<div class="t" style="left:259.60px;top:383.00px;font-size:6.4px;height:6.4px;line-height:6.4px;color:#8a8a8a;font-weight:normal;font-style:normal;font-family:'Liberation Sans',sans-serif;">DEBUG CONSOLE</div>
<div class="t" style="left:328.20px;top:383.00px;font-size:6.4px;height:6.4px;line-height:6.4px;color:#333;font-weight:normal;font-style:normal;font-family:'Liberation Sans',sans-serif;">TERMINAL</div>
<div class="a" style="left:327px;top:393px;width:34px;height:1px;background:#3c9ee0"></div>
<svg class="a" style="left:769.5px;top:381.5px;" width="9" height="9" viewBox="0 0 9 9"><path d="M4.5 .5v8M.5 4.5h8" stroke="#555" stroke-width=".8"/></svg>
<svg class="a" style="left:781px;top:384px;" width="5" height="4" viewBox="0 0 5 4"><path d="M.5 .8l2 2 2-2" fill="none" stroke="#666" stroke-width=".7"/></svg>
<svg class="a" style="left:792.3px;top:384.5px;" width="9" height="3" viewBox="0 0 9 3"><circle cx="1" cy="1.5" r=".7" fill="#555"/><circle cx="4.3" cy="1.5" r=".7" fill="#555"/><circle cx="7.6" cy="1.5" r=".7" fill="#555"/></svg>
<svg class="a" style="left:807.8px;top:382.5px;" width="7" height="5" viewBox="0 0 7 5"><path d="M.6 4l2.9-2.9L6.4 4" fill="none" stroke="#444" stroke-width=".9"/></svg>
<svg class="a" style="left:823px;top:382px;" width="6" height="7" viewBox="0 0 6 7"><path d="M.8 .8l5 5M5.8 .8l-5 5" stroke="#444" stroke-width=".9"/></svg>
<div class="a" style="left:770.2px;top:395px;width:0.8px;height:65px;background:#e0e0e0"></div>
<div class="a" style="left:771px;top:408px;width:57px;height:13px;background:#efefef"></div>
<div class="a" style="left:771px;top:408px;width:1px;height:12.5px;background:#3c9ee0"></div>
<svg class="a" style="left:777px;top:397.4px;" width="9" height="9" viewBox="0 0 9 9"><rect x=".5" y=".5" width="8" height="8" rx="1.3" fill="none" stroke="#666" stroke-width=".8"/><path d="M3.2 2.5l2 2-2 2" fill="none" stroke="#555" stroke-width=".8"/></svg>
<div class="t" style="left:788.30px;top:397.76px;font-size:7.87px;height:7.87px;line-height:7.87px;color:#333;font-weight:normal;font-style:normal;font-family:'Liberation Sans',sans-serif;">Python</div>
<svg class="a" style="left:777px;top:410.0px;" width="9" height="9" viewBox="0 0 9 9"><rect x=".5" y=".5" width="8" height="8" rx="1.3" fill="none" stroke="#666" stroke-width=".8"/><path d="M3.2 2.5l2 2-2 2" fill="none" stroke="#555" stroke-width=".8"/></svg>
<div class="t" style="left:788.30px;top:410.37px;font-size:7.87px;height:7.87px;line-height:7.87px;color:#333;font-weight:normal;font-style:normal;font-family:'Liberation Sans',sans-serif;">Python</div>
<div class="a" style="left:768.3px;top:404.5px;width:1.4px;height:1.4px;background:#e54444"></div>
<div class="a" style="left:765px;top:451px;width:1.2px;height:2.5px;background:#33aa44"></div>
<div class="t" style="left:171.20px;top:406.50px;font-size:7.2px;height:7.2px;line-height:7.2px;color:#333;font-weight:normal;font-style:normal;font-family:'Liberation Mono',monospace;letter-spacing:-0.271px">Action: emotion: 100%|</div>
<div class="t" style="left:626.20px;top:406.50px;font-size:7.2px;height:7.2px;line-height:7.2px;color:#333;font-weight:normal;font-style:normal;font-family:'Liberation Mono',monospace;letter-spacing:-0.271px">| 1/1 [00:00&lt;00:00, 53.89it/s]</div>
<div class="t" style="left:171.20px;top:415.63px;font-size:7.2px;height:7.2px;line-height:7.2px;color:#333;font-weight:normal;font-style:normal;font-family:'Liberation Mono',monospace;letter-spacing:-0.271px">Action: emotion: 100%|</div>
<div class="t" style="left:626.20px;top:415.63px;font-size:7.2px;height:7.2px;line-height:7.2px;color:#333;font-weight:normal;font-style:normal;font-family:'Liberation Mono',monospace;letter-spacing:-0.271px">| 1/1 [00:00&lt;00:00, 53.72it/s]</div>
<div class="t" style="left:171.20px;top:424.76px;font-size:7.2px;height:7.2px;line-height:7.2px;color:#333;font-weight:normal;font-style:normal;font-family:'Liberation Mono',monospace;letter-spacing:-0.271px">Action: emotion: 100%|</div>
<div class="t" style="left:626.20px;top:424.76px;font-size:7.2px;height:7.2px;line-height:7.2px;color:#333;font-weight:normal;font-style:normal;font-family:'Liberation Mono',monospace;letter-spacing:-0.271px">| 1/1 [00:00&lt;00:00, 54.68it/s]</div>
<div class="t" style="left:171.20px;top:433.89px;font-size:7.2px;height:7.2px;line-height:7.2px;color:#333;font-weight:normal;font-style:normal;font-family:'Liberation Mono',monospace;letter-spacing:-0.271px">Action: emotion: 100%|</div>
<div class="t" style="left:626.20px;top:433.89px;font-size:7.2px;height:7.2px;line-height:7.2px;color:#333;font-weight:normal;font-style:normal;font-family:'Liberation Mono',monospace;letter-spacing:-0.271px">| 1/1 [00:00&lt;00:00, 53.24it/s]</div>
<div class="t" style="left:171.20px;top:443.02px;font-size:7.2px;height:7.2px;line-height:7.2px;color:#333;font-weight:normal;font-style:normal;font-family:'Liberation Mono',monospace;letter-spacing:-0.271px">Action: emotion: 100%|</div>
<div class="t" style="left:626.20px;top:443.02px;font-size:7.2px;height:7.2px;line-height:7.2px;color:#333;font-weight:normal;font-style:normal;font-family:'Liberation Mono',monospace;letter-spacing:-0.271px">| 1/1 [00:00&lt;00:00, 53.43it/s]</div>
<div class="a" style="left:164.4px;top:452.6px;width:3.8px;height:3.8px;border-radius:50%;border:0.6px solid #c4c4c4"></div>
<div class="t" style="left:171.20px;top:453.10px;font-size:7.2px;height:7.2px;line-height:7.2px;color:#333;font-weight:normal;font-style:normal;font-family:'Liberation Mono',monospace;letter-spacing:-0.271px">swaritchoudhari@Swarits-MBP Face Recognition %</div>
<svg class="a" style="left:8.8px;top:463px;" width="8" height="8" viewBox="0 0 8 8"><circle cx="3.7" cy="3.8" r="3.2" fill="none" stroke="#4a4a4a" stroke-width=".8"/><path d="M2.5 2.6l2.4 2.4M4.9 2.6L2.5 5" stroke="#4a4a4a" stroke-width=".75"/></svg>
<div class="t" style="left:18.80px;top:463.02px;font-size:7.35px;height:7.35px;line-height:7.35px;color:#4a4a4a;font-weight:normal;font-style:normal;font-family:'Liberation Sans',sans-serif;">0</div>
<svg class="a" style="left:25.3px;top:462.8px;" width="8" height="7" viewBox="0 0 8 7"><path d="M4 .7L7.4 6.5H.6z" fill="none" stroke="#4a4a4a" stroke-width=".8" stroke-linejoin="round"/><path d="M4 2.6v2M4 5.2v.6" stroke="#4a4a4a" stroke-width=".7"/></svg>
<div class="t" style="left:35.00px;top:463.02px;font-size:7.35px;height:7.35px;line-height:7.35px;color:#4a4a4a;font-weight:normal;font-style:normal;font-family:'Liberation Sans',sans-serif;">0</div>
<svg class="a" style="left:49.3px;top:463.2px;" width="7" height="7" viewBox="0 0 7 7"><circle cx="3.5" cy="3.5" r="2.9" fill="none" stroke="#4a4a4a" stroke-width=".8"/><ellipse cx="3.5" cy="3.5" rx="1.2" ry="2.9" fill="none" stroke="#4a4a4a" stroke-width=".7"/><path d="M.6 3.5h5.8" stroke="#4a4a4a" stroke-width=".7"/></svg>
<div class="t" style="left:58.50px;top:463.02px;font-size:7.35px;height:7.35px;line-height:7.35px;color:#4a4a4a;font-weight:normal;font-style:normal;font-family:'Liberation Sans',sans-serif;">Connected to Discord</div>
<div class="t" style="left:138.90px;top:463.02px;font-size:7.35px;height:7.35px;line-height:7.35px;color:#4a4a4a;font-weight:normal;font-style:normal;font-family:'Liberation Sans',sans-serif;">-- INSERT --</div>
<div class="t" style="left:526.00px;top:463.02px;font-size:7.35px;height:7.35px;line-height:7.35px;color:#4a4a4a;font-weight:normal;font-style:normal;font-family:'Liberation Sans',sans-serif;">Ln 77, Col 29</div>
<div class="t" style="left:579.20px;top:463.02px;font-size:7.35px;height:7.35px;line-height:7.35px;color:#4a4a4a;font-weight:normal;font-style:normal;font-family:'Liberation Sans',sans-serif;">Spaces: 4</div>
<div class="t" style="left:620.80px;top:463.02px;font-size:7.35px;height:7.35px;line-height:7.35px;color:#4a4a4a;font-weight:normal;font-style:normal;font-family:'Liberation Sans',sans-serif;">UTF-8</div>
<div class="t" style="left:651.00px;top:463.02px;font-size:7.35px;height:7.35px;line-height:7.35px;color:#4a4a4a;font-weight:normal;font-style:normal;font-family:'Liberation Sans',sans-serif;">LF</div>
<div class="t" style="left:677.50px;top:463.02px;font-size:7.35px;height:7.35px;line-height:7.35px;color:#4a4a4a;font-weight:normal;font-style:normal;font-family:'Liberation Sans',sans-serif;">Python</div>
<div class="t" style="left:709.10px;top:463.02px;font-size:7.35px;height:7.35px;line-height:7.35px;color:#4a4a4a;font-weight:normal;font-style:normal;font-family:'Liberation Sans',sans-serif;">3.11.3 64-bit</div>
<div class="t" style="left:772.00px;top:463.02px;font-size:7.35px;height:7.35px;line-height:7.35px;color:#4a4a4a;font-weight:normal;font-style:normal;font-family:'Liberation Sans',sans-serif;">Go Live</div>
<div class="t" style="left:666.50px;top:462.70px;font-size:7px;height:7px;line-height:7px;color:#4a4a4a;font-weight:normal;font-style:normal;font-family:'Liberation Sans',sans-serif;">{</div>
<div class="a" style="left:670.5px;top:466px;width:2.6px;height:2.6px;border-radius:50%;background:#333"></div>
<svg class="a" style="left:762.8px;top:462.6px;" width="7" height="8" viewBox="0 0 7 8"><circle cx="3.5" cy="3.4" r="3" fill="#7a7a7a"/><path d="M2.6 5.4h1.8v2.3H2.6z" fill="#7a7a7a"/><circle cx="3.5" cy="3.6" r="1" fill="#bbb"/></svg>
<svg class="a" style="left:805.5px;top:462.3px;" width="9" height="9" viewBox="0 0 9 9"><path d="M.8 7.8c.4-1.8 1.2-2.8 2.6-3.2M3.4 4.6c1.4.4 2.2 1.4 2.6 3.2" fill="none" stroke="#4a4a4a" stroke-width=".75"/><circle cx="3.4" cy="3.2" r="1.5" fill="none" stroke="#4a4a4a" stroke-width=".75"/><path d="M4.6 .8h3.8v3H6.6l-1 1v-1h-1z" fill="none" stroke="#4a4a4a" stroke-width=".7"/></svg>
<svg class="a" style="left:823.5px;top:462.5px;" width="6" height="9" viewBox="0 0 6 9"><path d="M.7 7V3a2.3 2.3 0 0 1 2.3-2.3h3" fill="none" stroke="#4a4a4a" stroke-width=".8"/><path d="M.7 7h5" stroke="#4a4a4a" stroke-width=".8"/></svg>
<svg class="a" style="left:0px;top:466px;" width="7" height="7" viewBox="0 0 7 7"><path d="M0 0.5Q0.5 6.5 6.5 7H0z" fill="#111"/></svg>
<div class="a" style="left:359.3px;top:449.4px;width:58px;height:16px;background:#e6e7e9;border:0.6px solid #cfcfd1;border-radius:2.5px;box-shadow:0 0.5px 1.5px rgba(0,0,0,.15)"></div>
<div class="a" style="left:386.2px;top:462.8px;width:5.4px;height:5.4px;background:#e6e7e9;transform:rotate(45deg);border-right:0.6px solid #cfcfd1;border-bottom:0.6px solid #cfcfd1"></div>
<div class="t" style="left:367.50px;top:453.95px;font-size:8.1px;height:8.1px;line-height:8.1px;color:#2c2c2c;font-weight:normal;font-style:normal;font-family:'Liberation Sans',sans-serif;">Screenshot</div>
</body></html>
